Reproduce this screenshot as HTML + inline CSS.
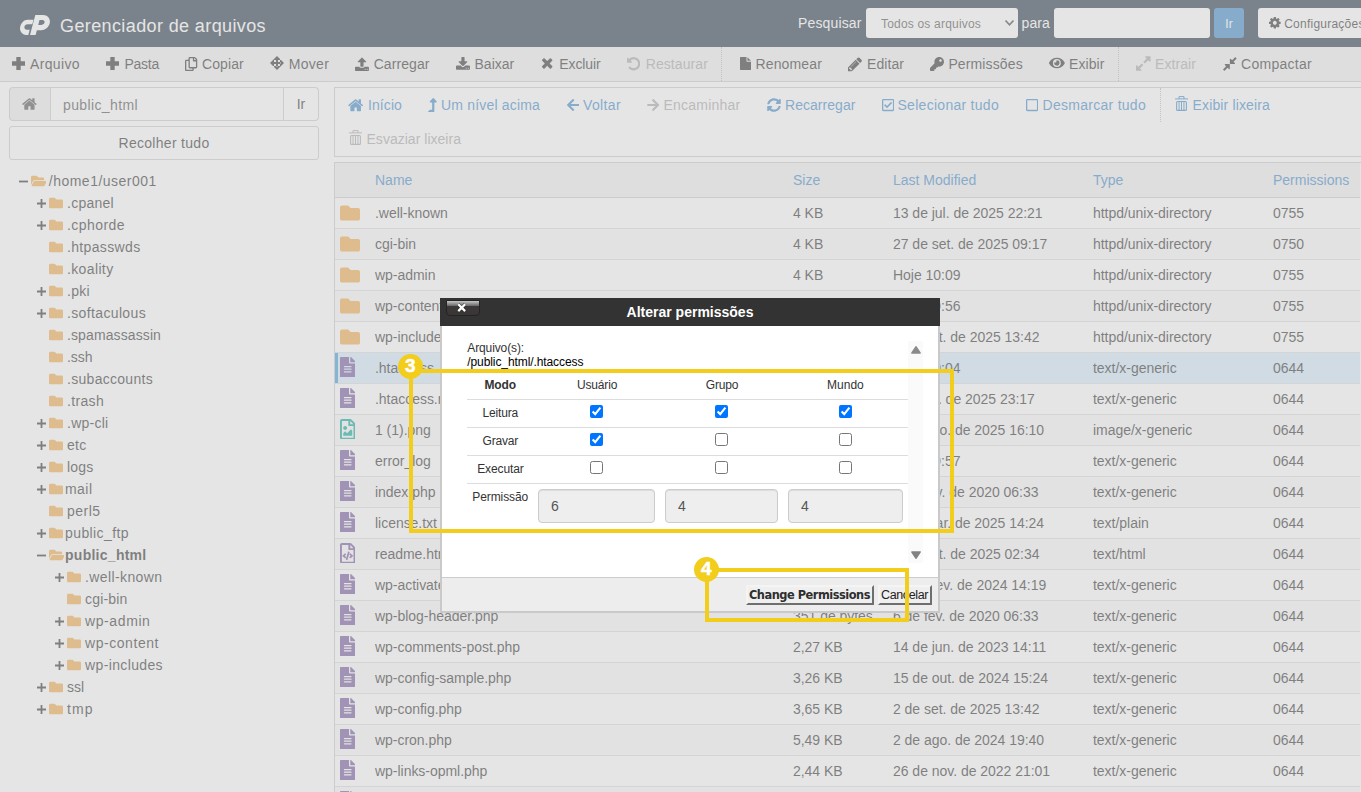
<!DOCTYPE html>
<html lang="pt-BR"><head><meta charset="utf-8"><title>Gerenciador de arquivos</title>
<style>
html,body{margin:0;padding:0}
body{width:1361px;height:792px;overflow:hidden;position:relative;background:#fff;font-family:'Liberation Sans', Arial, sans-serif}
#page,#mask,#dlg,#ann{position:absolute;left:0;top:0;width:1361px;height:792px;overflow:hidden}
#mask{background:rgba(204,204,204,.5)}
svg{display:block}
</style></head><body>
<div id="page">
<div style="position:absolute;left:0;top:0;width:1361px;height:47px;background:#293a4a"></div>
<svg style="position:absolute;left:20px;top:15px" width="30" height="20" viewBox="0 0 30 20">
<path fill="#fff" d="M7.400 4.800h6.100l-1.200 4.400H7.700c-1.500 0-2.800.900-3.200 2.300-.5 1.800.600 3.300 2.300 3.300h2.900L8.300 20H6.300C2.100 20-.9 16.100.3 11.600 1.300 7.600 4.200 4.800 7.400 4.800z"/>
<path fill="#fff" fill-rule="evenodd" d="M10 20L15.300 0H23.300C27.600 0 30.800 3.900 29.700 8.200 28.700 12.100 25.200 15.200 21.200 15.200H16.900L15.600 20zM19.500 4.900L18.200 9.900H21.500C22.900 9.900 24.200 8.900 24.500 7.600 24.900 6.200 23.900 4.900 22.500 4.900z"/>
</svg>
<div style="position:absolute;left:866px;top:8px;width:151.5px;height:30px;background:#fff;border-radius:3px"></div>
<svg style="position:absolute;left:1004px;top:18.5px" width="11" height="8" viewBox="0 0 11 8"><path d="M1.500 1.500L5.500 5.800L9.500 1.500" fill="none" stroke="#444" stroke-width="1.700"/></svg>
<div style="position:absolute;left:1054px;top:8px;width:155.5px;height:30px;background:#fff;border-radius:3px"></div>
<div style="position:absolute;left:1214px;top:8px;width:30px;height:30px;background:#428bca;border-radius:3px"></div>
<div style="position:absolute;left:1258px;top:8px;width:120px;height:30px;background:#fff;border-radius:3px"></div>
<svg style="position:absolute;left:1269.2px;top:16.2px;" width="11.66" height="13.6" viewBox="0 0 1536 1792"><path fill="#333" d="M1024 896q0-106-75-181t-181-75-181 75-75 181 75 181 181 75 181-75 75-181zm512-109v222q0 12-8 23t-20 13l-185 28q-19 54-39 91 35 50 107 138 10 12 10 25t-9 23q-27 37-99 108t-94 71q-12 0-26-9l-138-108q-44 23-91 38-16 136-29 186-7 28-36 28h-222q-14 0-24.500-8.500t-11.500-21.500l-28-184q-49-16-90-37l-141 107q-10 9-25 9-14 0-25-11-126-114-165-168-7-10-7-23 0-12 8-23 15-21 51-66.500t54-70.500q-27-50-41-99l-183-27q-13-2-21-12.500t-8-23.500v-222q0-12 8-23t19-13l186-28q14-46 39-92-40-57-107-138-10-12-10-24 0-10 9-23 26-36 98.500-107.500t94.500-71.500q13 0 26 10l138 107q44-23 91-38 16-136 29-186 7-28 36-28h222q14 0 24.500 8.500t11.500 21.500l28 184q49 16 90 37l142-107q9-9 24-9 13 0 25 10 129 119 165 170 7 8 7 22 0 12-8 23-15 21-51 66.500t-54 70.500q26 50 41 98l183 28q13 2 21 12.500t8 23.500z"/></svg>
<div style="position:absolute;left:0;top:47px;width:1361px;height:34px;background:#f0f0f0;border-bottom:1px solid #ccc"></div>
<svg style="position:absolute;left:12px;top:57px" width="13" height="13" viewBox="0 0 13 13"><path fill="#333" d="M4.3225 0h4.355v4.3225h4.3225v4.355h-4.3225v4.3225h-4.355v-4.3225h-4.3225v-4.355h4.3225z"/></svg>
<svg style="position:absolute;left:106.2px;top:57px" width="13" height="13" viewBox="0 0 13 13"><path fill="#333" d="M4.3225 0h4.355v4.3225h4.3225v4.355h-4.3225v4.3225h-4.355v-4.3225h-4.3225v-4.355h4.3225z"/></svg>
<svg style="position:absolute;left:185.3px;top:56.8px;" width="12.25" height="14" viewBox="0 0 448 512"><path fill="#333" d="M433.941 65.941l-51.882-51.882A48 48 0 0 0 348.118 0H176c-26.510 0-48 21.490-48 48v48H48c-26.510 0-48 21.490-48 48v320c0 26.510 21.490 48 48 48h224c26.510 0 48-21.490 48-48v-48h80c26.510 0 48-21.490 48-48V99.882a48 48 0 0 0-14.059-33.941zM266 464H54a6 6 0 0 1-6-6V150a6 6 0 0 1 6-6h74v224c0 26.510 21.490 48 48 48h96v42a6 6 0 0 1-6 6zm128-96H182a6 6 0 0 1-6-6V54a6 6 0 0 1 6-6h106v88c0 13.255 10.745 24 24 24h88v202a6 6 0 0 1-6 6zm6-256h-64V48h9.632c1.591 0 3.117.632 4.243 1.757l48.368 48.368a6 6 0 0 1 1.757 4.243V112z"/></svg>
<svg style="position:absolute;left:270.200px;top:56px;" width="14" height="14" viewBox="0 0 14 14"><path fill="#333" d="M7 0L11 4H3zM7 14L11 10H3zM0 7L4 3V11zM14 7L10 3V11zM6.050 3.500h1.900v7H6.050zM3.500 6.050h7v1.900h-7z"/></svg>
<svg style="position:absolute;left:355px;top:56.6px;" width="13.93" height="15" viewBox="0 0 1664 1792"><path fill="#333" d="M1280 1472q0-26-19-45t-45-19-45 19-19 45 19 45 45 19 45-19 19-45zm256 0q0-26-19-45t-45-19-45 19-19 45 19 45 45 19 45-19 19-45zm128-224v320q0 40-28 68t-68 28h-1472q-40 0-68-28t-28-68v-320q0-40 28-68t68-28h427q21 56 70.500 92t110.500 36h256q61 0 110.500-36t70.500-92h427q40 0 68 28t28 68zm-325-648q-17 40-59 40h-256v448q0 26-19 45t-45 19h-256q-26 0-45-19t-19-45v-448h-256q-42 0-59-40-17-39 14-69l448-448q18-19 45-19t45 19l448 448q31 30 14 69z"/></svg>
<svg style="position:absolute;left:455.7px;top:56.9px;" width="13.93" height="15" viewBox="0 0 1664 1792"><path fill="#333" d="M1280 1344q0-26-19-45t-45-19-45 19-19 45 19 45 45 19 45-19 19-45zm256 0q0-26-19-45t-45-19-45 19-19 45 19 45 45 19 45-19 19-45zm128-224v320q0 40-28 68t-68 28h-1472q-40 0-68-28t-28-68v-320q0-40 28-68t68-28h465l135 136q58 56 136 56t136-56l136-136h464q40 0 68 28t28 68zm-325-569q17 41-14 70l-448 448q-18 19-45 19t-45-19l-448-448q-31-29-14-70 17-39 59-39h256v-448q0-26 19-45t45-19h256q26 0 45 19t19 45v448h256q42 0 59 39z"/></svg>
<svg style="position:absolute;left:541.4px;top:54.8px;" width="12.41" height="15.8" viewBox="0 0 1408 1792"><path fill="#333" d="M1298 1322q0 40-28 68l-136 136q-28 28-68 28t-68-28l-294-294-294 294q-28 28-68 28t-68-28l-136-136q-28-28-28-68t28-68l294-294-294-294q-28-28-28-68t28-68l136-136q28-28 68-28t68 28l294 294 294-294q28-28 68-28t68 28l136 136q28 28 28 68t-28 68l-294 294 294 294q28 28 28 68z"/></svg>
<svg style="position:absolute;left:627px;top:55.8px;" width="13.29" height="15.5" viewBox="0 0 1536 1792"><path fill="#aaa" d="M1536 896q0 156-61 298t-164 245-245 164-298 61q-172 0-327-72.500t-264-204.500q-7-10-6.500-22.500t8.500-20.500l137-138q10-9 25-9 16 2 23 12 73 95 179 147t225 52q104 0 198.500-40.500t163.500-109.500 109.500-163.500 40.500-198.500-40.500-198.500-109.500-163.500-163.500-109.500-198.500-40.500q-98 0-188 35.500t-160 101.500l137 138q31 30 14 69-17 40-59 40h-448q-26 0-45-19t-19-45v-448q0-42 40-59 39-17 69 14l130 129q107-101 244.500-156.500t284.500-55.500q156 0 298 61t245 164 164 245 61 298z"/></svg>
<div style="position:absolute;left:721px;top:47px;width:0;height:34px;border-left:1px dotted #bbb"></div>
<svg style="position:absolute;left:740px;top:56.7px;" width="11.14" height="13" viewBox="0 0 1536 1792"><path fill="#333" d="M1024 512v-472q22 14 36 28l408 408q14 14 28 36h-472zm-128 32q0 40 28 68t68 28h544v1056q0 40-28 68t-68 28h-1344q-40 0-68-28t-28-68v-1600q0-40 28-68t68-28h800v544z"/></svg>
<svg style="position:absolute;left:848px;top:55.5px;" width="14.14" height="16.5" viewBox="0 0 1536 1792"><path fill="#333" d="M363 1536l91-91-235-235-91 91v107h128v128h107zm523-928q0-22-22-22-10 0-17 7l-542 542q-7 7-7 17 0 22 22 22 10 0 17-7l542-542q7-7 7-17zm-54-192l416 416-832 832h-416v-416zm683 96q0 53-37 90l-166 166-416-416 166-165q36-38 90-38 53 0 91 38l235 234q37 39 37 91z"/></svg>
<svg style="position:absolute;left:930.2px;top:57px;" width="14.00" height="14" viewBox="0 0 512 512"><path fill="#333" d="M512 176.001C512 273.203 433.202 352 336 352c-11.220 0-22.190-1.062-32.827-3.069l-24.012 27.014A23.999 23.999 0 0 1 261.223 384H224v40c0 13.255-10.745 24-24 24h-40v40c0 13.255-10.745 24-24 24H24c-13.255 0-24-10.745-24-24v-78.059c0-6.365 2.529-12.470 7.029-16.971l161.802-161.802C163.108 213.814 160 195.271 160 176 160 78.798 238.797.001 335.999 0 433.488-.001 512 78.511 512 176.001zM336 128c0 26.510 21.490 48 48 48s48-21.490 48-48-21.490-48-48-48-48 21.490-48 48z"/></svg>
<svg style="position:absolute;left:1049px;top:56.4px;" width="15.75" height="14" viewBox="0 0 576 512"><path fill="#333" d="M572.520 241.400C518.290 135.590 410.930 64 288 64S57.680 135.640 3.480 241.410a32.350 32.350 0 0 0 0 29.190C57.710 376.410 165.070 448 288 448s230.320-71.640 284.520-177.410a32.350 32.350 0 0 0 0-29.190zM288 400a144 144 0 1 1 144-144 143.930 143.930 0 0 1-144 144zm0-240a95.310 95.310 0 0 0-25.310 3.790 47.850 47.850 0 0 1-66.900 66.900A95.780 95.780 0 1 0 288 160z"/></svg>
<div style="position:absolute;left:1118px;top:47px;width:0;height:34px;border-left:1px dotted #bbb"></div>
<svg style="position:absolute;left:1136px;top:54.5px;" width="14.57" height="17" viewBox="0 0 1536 1792"><path fill="#aaa" d="M755 1056q0 13-10 23l-332 332 144 144q19 19 19 45t-19 45-45 19h-448q-26 0-45-19t-19-45v-448q0-26 19-45t45-19 45 19l144 144 332-332q10-10 23-10t23 10l114 114q10 10 10 23zm781-864v448q0 26-19 45t-45 19-45-19l-144-144-332 332q-10 10-23 10t-23-10l-114-114q-10-10-10-23t10-23l332-332-144-144q-19-19-19-45t19-45 45-19h448q26 0 45 19t19 45z"/></svg>
<svg style="position:absolute;left:1223.4px;top:55.5px;" width="13.71" height="16" viewBox="0 0 1536 1792"><path fill="#333" d="M768 960v448q0 26-19 45t-45 19-45-19l-144-144-332 332q-10 10-23 10t-23-10l-114-114q-10-10-10-23t10-23l332-332-144-144q-19-19-19-45t19-45 45-19h448q26 0 45 19t19 45zm755-672q0 13-10 23l-332 332 144 144q19 19 19 45t-19 45-45 19h-448q-26 0-45-19t-19-45v-448q0-26 19-45t45-19 45 19l144 144 332-332q10-10 23-10t23 10l114 114q10 10 10 23z"/></svg>
<div style="position:absolute;left:9px;top:87px;width:310px;height:34px;box-sizing:border-box;border:1px solid #ccc;border-radius:4px;background:#fff"></div>
<div style="position:absolute;left:9px;top:87px;width:41.500px;height:34px;box-sizing:border-box;border:1px solid #ccc;border-radius:4px 0 0 4px;background:#eee"></div>
<div style="position:absolute;left:282.700px;top:87px;width:36.300px;height:34px;box-sizing:border-box;border:1px solid #ccc;border-radius:0 4px 4px 0;background:#fff"></div>
<svg style="position:absolute;left:22px;top:96px;" width="14.86" height="16" viewBox="0 0 1664 1792"><path fill="#555" d="M1408 992v480q0 26-19 45t-45 19h-384v-384h-256v384h-384q-26 0-45-19t-19-45v-480q0-1 .5-3t.5-3l575-474 575 474q1 2 1 6zm223-69l-62 74q-8 9-21 11h-3q-13 0-21-7l-692-577-692 577q-12 8-24 7-13-2-21-11l-62-74q-8-10-7-23.500t11-21.500l719-599q32-26 76-26t76 26l244 204v-195q0-14 9-23t23-9h192q14 0 23 9t9 23v408l219 182q10 8 11 21.500t-7 23.500z"/></svg>
<div style="position:absolute;left:9px;top:126px;width:310px;height:34px;box-sizing:border-box;border:1px solid #ccc;border-radius:3px;background:#fff"></div>
<svg style="position:absolute;left:19px;top:176.5px" width="9" height="9" viewBox="0 0 9 9"><path d="M0 4.500h9" stroke="#333" stroke-width="1.800"/></svg>
<svg style="position:absolute;left:30.7px;top:173.7px;" width="15.75" height="14" viewBox="0 0 576 512"><path fill="#f0ad4e" d="M572.694 292.093L500.27 416.248A63.997 63.997 0 0 1 444.989 448H45.025c-18.523 0-30.064-20.093-20.731-36.093l72.424-124.155A64 64 0 0 1 152 256h399.964c18.523 0 30.064 20.093 20.730 36.093zM152 224h328v-48c0-26.510-21.490-48-48-48H272l-64-64H48C21.490 64 0 85.490 0 112v278.046l69.077-118.418C86.214 242.250 117.989 224 152 224z"/></svg>
<svg style="position:absolute;left:37px;top:198.5px" width="9" height="9" viewBox="0 0 9 9"><path d="M0 4.500h9M4.500 0v9" stroke="#333" stroke-width="1.800"/></svg>
<svg style="position:absolute;left:48.7px;top:195.7px;" width="14.00" height="14" viewBox="0 0 512 512"><path fill="#f0ad4e" d="M464 128H272l-64-64H48C21.49 64 0 85.49 0 112v288c0 26.51 21.49 48 48 48h416c26.51 0 48-21.49 48-48V176c0-26.51-21.49-48-48-48z"/></svg>
<svg style="position:absolute;left:37px;top:220.5px" width="9" height="9" viewBox="0 0 9 9"><path d="M0 4.500h9M4.500 0v9" stroke="#333" stroke-width="1.800"/></svg>
<svg style="position:absolute;left:48.7px;top:217.7px;" width="14.00" height="14" viewBox="0 0 512 512"><path fill="#f0ad4e" d="M464 128H272l-64-64H48C21.49 64 0 85.49 0 112v288c0 26.51 21.49 48 48 48h416c26.51 0 48-21.49 48-48V176c0-26.51-21.49-48-48-48z"/></svg>
<svg style="position:absolute;left:48.7px;top:239.7px;" width="14.00" height="14" viewBox="0 0 512 512"><path fill="#f0ad4e" d="M464 128H272l-64-64H48C21.49 64 0 85.49 0 112v288c0 26.51 21.49 48 48 48h416c26.51 0 48-21.49 48-48V176c0-26.51-21.49-48-48-48z"/></svg>
<svg style="position:absolute;left:48.7px;top:261.7px;" width="14.00" height="14" viewBox="0 0 512 512"><path fill="#f0ad4e" d="M464 128H272l-64-64H48C21.49 64 0 85.49 0 112v288c0 26.51 21.49 48 48 48h416c26.51 0 48-21.49 48-48V176c0-26.51-21.49-48-48-48z"/></svg>
<svg style="position:absolute;left:37px;top:286.5px" width="9" height="9" viewBox="0 0 9 9"><path d="M0 4.500h9M4.500 0v9" stroke="#333" stroke-width="1.800"/></svg>
<svg style="position:absolute;left:48.7px;top:283.7px;" width="14.00" height="14" viewBox="0 0 512 512"><path fill="#f0ad4e" d="M464 128H272l-64-64H48C21.49 64 0 85.49 0 112v288c0 26.51 21.49 48 48 48h416c26.51 0 48-21.49 48-48V176c0-26.51-21.49-48-48-48z"/></svg>
<svg style="position:absolute;left:37px;top:308.5px" width="9" height="9" viewBox="0 0 9 9"><path d="M0 4.500h9M4.500 0v9" stroke="#333" stroke-width="1.800"/></svg>
<svg style="position:absolute;left:48.7px;top:305.7px;" width="14.00" height="14" viewBox="0 0 512 512"><path fill="#f0ad4e" d="M464 128H272l-64-64H48C21.49 64 0 85.49 0 112v288c0 26.51 21.49 48 48 48h416c26.51 0 48-21.49 48-48V176c0-26.51-21.49-48-48-48z"/></svg>
<svg style="position:absolute;left:48.7px;top:327.7px;" width="14.00" height="14" viewBox="0 0 512 512"><path fill="#f0ad4e" d="M464 128H272l-64-64H48C21.49 64 0 85.49 0 112v288c0 26.51 21.49 48 48 48h416c26.51 0 48-21.49 48-48V176c0-26.51-21.49-48-48-48z"/></svg>
<svg style="position:absolute;left:48.7px;top:349.7px;" width="14.00" height="14" viewBox="0 0 512 512"><path fill="#f0ad4e" d="M464 128H272l-64-64H48C21.49 64 0 85.49 0 112v288c0 26.51 21.49 48 48 48h416c26.51 0 48-21.49 48-48V176c0-26.51-21.49-48-48-48z"/></svg>
<svg style="position:absolute;left:48.7px;top:371.7px;" width="14.00" height="14" viewBox="0 0 512 512"><path fill="#f0ad4e" d="M464 128H272l-64-64H48C21.49 64 0 85.49 0 112v288c0 26.51 21.49 48 48 48h416c26.51 0 48-21.49 48-48V176c0-26.51-21.49-48-48-48z"/></svg>
<svg style="position:absolute;left:48.7px;top:393.7px;" width="14.00" height="14" viewBox="0 0 512 512"><path fill="#f0ad4e" d="M464 128H272l-64-64H48C21.49 64 0 85.49 0 112v288c0 26.51 21.49 48 48 48h416c26.51 0 48-21.49 48-48V176c0-26.51-21.49-48-48-48z"/></svg>
<svg style="position:absolute;left:37px;top:418.5px" width="9" height="9" viewBox="0 0 9 9"><path d="M0 4.500h9M4.500 0v9" stroke="#333" stroke-width="1.800"/></svg>
<svg style="position:absolute;left:48.7px;top:415.7px;" width="14.00" height="14" viewBox="0 0 512 512"><path fill="#f0ad4e" d="M464 128H272l-64-64H48C21.49 64 0 85.49 0 112v288c0 26.51 21.49 48 48 48h416c26.51 0 48-21.49 48-48V176c0-26.51-21.49-48-48-48z"/></svg>
<svg style="position:absolute;left:37px;top:440.5px" width="9" height="9" viewBox="0 0 9 9"><path d="M0 4.500h9M4.500 0v9" stroke="#333" stroke-width="1.800"/></svg>
<svg style="position:absolute;left:48.7px;top:437.7px;" width="14.00" height="14" viewBox="0 0 512 512"><path fill="#f0ad4e" d="M464 128H272l-64-64H48C21.49 64 0 85.49 0 112v288c0 26.51 21.49 48 48 48h416c26.51 0 48-21.49 48-48V176c0-26.51-21.49-48-48-48z"/></svg>
<svg style="position:absolute;left:37px;top:462.5px" width="9" height="9" viewBox="0 0 9 9"><path d="M0 4.500h9M4.500 0v9" stroke="#333" stroke-width="1.800"/></svg>
<svg style="position:absolute;left:48.7px;top:459.7px;" width="14.00" height="14" viewBox="0 0 512 512"><path fill="#f0ad4e" d="M464 128H272l-64-64H48C21.49 64 0 85.49 0 112v288c0 26.51 21.49 48 48 48h416c26.51 0 48-21.49 48-48V176c0-26.51-21.49-48-48-48z"/></svg>
<svg style="position:absolute;left:37px;top:484.5px" width="9" height="9" viewBox="0 0 9 9"><path d="M0 4.500h9M4.500 0v9" stroke="#333" stroke-width="1.800"/></svg>
<svg style="position:absolute;left:48.7px;top:481.7px;" width="14.00" height="14" viewBox="0 0 512 512"><path fill="#f0ad4e" d="M464 128H272l-64-64H48C21.49 64 0 85.49 0 112v288c0 26.51 21.49 48 48 48h416c26.51 0 48-21.49 48-48V176c0-26.51-21.49-48-48-48z"/></svg>
<svg style="position:absolute;left:48.7px;top:503.7px;" width="14.00" height="14" viewBox="0 0 512 512"><path fill="#f0ad4e" d="M464 128H272l-64-64H48C21.49 64 0 85.49 0 112v288c0 26.51 21.49 48 48 48h416c26.51 0 48-21.49 48-48V176c0-26.51-21.49-48-48-48z"/></svg>
<svg style="position:absolute;left:37px;top:528.5px" width="9" height="9" viewBox="0 0 9 9"><path d="M0 4.500h9M4.500 0v9" stroke="#333" stroke-width="1.800"/></svg>
<svg style="position:absolute;left:48.7px;top:525.7px;" width="14.00" height="14" viewBox="0 0 512 512"><path fill="#f0ad4e" d="M464 128H272l-64-64H48C21.49 64 0 85.49 0 112v288c0 26.51 21.49 48 48 48h416c26.51 0 48-21.49 48-48V176c0-26.51-21.49-48-48-48z"/></svg>
<svg style="position:absolute;left:37px;top:550.5px" width="9" height="9" viewBox="0 0 9 9"><path d="M0 4.500h9" stroke="#333" stroke-width="1.800"/></svg>
<svg style="position:absolute;left:48.7px;top:547.7px;" width="15.75" height="14" viewBox="0 0 576 512"><path fill="#f0ad4e" d="M572.694 292.093L500.27 416.248A63.997 63.997 0 0 1 444.989 448H45.025c-18.523 0-30.064-20.093-20.731-36.093l72.424-124.155A64 64 0 0 1 152 256h399.964c18.523 0 30.064 20.093 20.730 36.093zM152 224h328v-48c0-26.510-21.490-48-48-48H272l-64-64H48C21.490 64 0 85.490 0 112v278.046l69.077-118.418C86.214 242.250 117.989 224 152 224z"/></svg>
<svg style="position:absolute;left:55px;top:572.5px" width="9" height="9" viewBox="0 0 9 9"><path d="M0 4.500h9M4.500 0v9" stroke="#333" stroke-width="1.800"/></svg>
<svg style="position:absolute;left:67px;top:569.7px;" width="14.00" height="14" viewBox="0 0 512 512"><path fill="#f0ad4e" d="M464 128H272l-64-64H48C21.49 64 0 85.49 0 112v288c0 26.51 21.49 48 48 48h416c26.51 0 48-21.49 48-48V176c0-26.51-21.49-48-48-48z"/></svg>
<svg style="position:absolute;left:67px;top:591.7px;" width="14.00" height="14" viewBox="0 0 512 512"><path fill="#f0ad4e" d="M464 128H272l-64-64H48C21.49 64 0 85.49 0 112v288c0 26.51 21.49 48 48 48h416c26.51 0 48-21.49 48-48V176c0-26.51-21.49-48-48-48z"/></svg>
<svg style="position:absolute;left:55px;top:616.5px" width="9" height="9" viewBox="0 0 9 9"><path d="M0 4.500h9M4.500 0v9" stroke="#333" stroke-width="1.800"/></svg>
<svg style="position:absolute;left:67px;top:613.7px;" width="14.00" height="14" viewBox="0 0 512 512"><path fill="#f0ad4e" d="M464 128H272l-64-64H48C21.49 64 0 85.49 0 112v288c0 26.51 21.49 48 48 48h416c26.51 0 48-21.49 48-48V176c0-26.51-21.49-48-48-48z"/></svg>
<svg style="position:absolute;left:55px;top:638.5px" width="9" height="9" viewBox="0 0 9 9"><path d="M0 4.500h9M4.500 0v9" stroke="#333" stroke-width="1.800"/></svg>
<svg style="position:absolute;left:67px;top:635.7px;" width="14.00" height="14" viewBox="0 0 512 512"><path fill="#f0ad4e" d="M464 128H272l-64-64H48C21.49 64 0 85.49 0 112v288c0 26.51 21.49 48 48 48h416c26.51 0 48-21.49 48-48V176c0-26.51-21.49-48-48-48z"/></svg>
<svg style="position:absolute;left:55px;top:660.5px" width="9" height="9" viewBox="0 0 9 9"><path d="M0 4.500h9M4.500 0v9" stroke="#333" stroke-width="1.800"/></svg>
<svg style="position:absolute;left:67px;top:657.7px;" width="14.00" height="14" viewBox="0 0 512 512"><path fill="#f0ad4e" d="M464 128H272l-64-64H48C21.49 64 0 85.49 0 112v288c0 26.51 21.49 48 48 48h416c26.51 0 48-21.49 48-48V176c0-26.51-21.49-48-48-48z"/></svg>
<svg style="position:absolute;left:37px;top:682.5px" width="9" height="9" viewBox="0 0 9 9"><path d="M0 4.500h9M4.500 0v9" stroke="#333" stroke-width="1.800"/></svg>
<svg style="position:absolute;left:48.7px;top:679.7px;" width="14.00" height="14" viewBox="0 0 512 512"><path fill="#f0ad4e" d="M464 128H272l-64-64H48C21.49 64 0 85.49 0 112v288c0 26.51 21.49 48 48 48h416c26.51 0 48-21.49 48-48V176c0-26.51-21.49-48-48-48z"/></svg>
<svg style="position:absolute;left:37px;top:704.5px" width="9" height="9" viewBox="0 0 9 9"><path d="M0 4.500h9M4.500 0v9" stroke="#333" stroke-width="1.800"/></svg>
<svg style="position:absolute;left:48.7px;top:701.7px;" width="14.00" height="14" viewBox="0 0 512 512"><path fill="#f0ad4e" d="M464 128H272l-64-64H48C21.49 64 0 85.49 0 112v288c0 26.51 21.49 48 48 48h416c26.51 0 48-21.49 48-48V176c0-26.51-21.49-48-48-48z"/></svg>
<div style="position:absolute;left:334px;top:87px;width:1040px;height:70px;box-sizing:border-box;border:1px solid #ccc;background:#fff"></div>
<svg style="position:absolute;left:348px;top:96.5px;" width="15.32" height="16.5" viewBox="0 0 1664 1792"><path fill="#428bca" d="M1408 992v480q0 26-19 45t-45 19h-384v-384h-256v384h-384q-26 0-45-19t-19-45v-480q0-1 .5-3t.5-3l575-474 575 474q1 2 1 6zm223-69l-62 74q-8 9-21 11h-3q-13 0-21-7l-692-577-692 577q-12 8-24 7-13-2-21-11l-62-74q-8-10-7-23.500t11-21.500l719-599q32-26 76-26t76 26l244 204v-195q0-14 9-23t23-9h192q14 0 23 9t9 23v408l219 182q10 8 11 21.500t-7 23.500z"/></svg>
<svg style="position:absolute;left:428px;top:98px;" width="8.75" height="14" viewBox="0 0 320 512"><path fill="#428bca" d="M313.553 119.669L209.587 7.666c-9.485-10.214-25.676-10.229-35.174 0L70.438 119.669C56.232 134.969 67.062 160 88.025 160H152v272H68.024a11.996 11.996 0 0 0-8.485 3.515l-56 56C-4.021 499.074 1.333 512 12.024 512H208c13.255 0 24-10.745 24-24V160h63.966c20.878 0 31.851-24.969 17.587-40.331z"/></svg>
<svg style="position:absolute;left:566.5px;top:98px;" width="12.25" height="14" viewBox="0 0 448 512"><path fill="#428bca" d="M257.5 445.100l-22.200 22.200c-9.400 9.400-24.600 9.400-33.900 0L7 273c-9.400-9.400-9.400-24.600 0-33.900L201.400 44.700c9.400-9.400 24.600-9.400 33.900 0l22.200 22.200c9.500 9.500 9.300 25-.4 34.300L136.600 216H424c13.300 0 24 10.700 24 24v32c0 13.300-10.700 24-24 24H136.600l120.500 114.800c9.800 9.300 10 24.800.4 34.300z"/></svg>
<svg style="position:absolute;left:647px;top:98px;transform:scaleX(-1);" width="12.25" height="14" viewBox="0 0 448 512"><path fill="#aaa" d="M257.5 445.100l-22.200 22.200c-9.400 9.400-24.600 9.400-33.900 0L7 273c-9.400-9.400-9.400-24.600 0-33.900L201.400 44.700c9.400-9.400 24.600-9.400 33.900 0l22.200 22.200c9.500 9.500 9.300 25-.4 34.300L136.600 216H424c13.300 0 24 10.700 24 24v32c0 13.300-10.700 24-24 24H136.600l120.500 114.800c9.800 9.300 10 24.800.4 34.300z"/></svg>
<svg style="position:absolute;left:767px;top:98px;" width="14.00" height="14" viewBox="0 0 512 512"><path fill="#428bca" d="M370.720 133.280C339.458 104.008 298.888 87.962 255.848 88c-77.458.068-144.328 53.178-162.791 126.850-1.344 5.363-6.122 9.150-11.651 9.150H24.103c-7.498 0-13.194-6.807-11.807-14.176C33.933 94.924 134.813 8 256 8c66.448 0 126.791 26.136 171.315 68.685L463.030 40.970C478.149 25.851 504 36.559 504 57.941V192c0 13.255-10.745 24-24 24H345.941c-21.382 0-32.090-25.851-16.971-40.971l41.750-41.749zM32 296h134.059c21.382 0 32.090 25.851 16.971 40.971l-41.750 41.750c31.262 29.273 71.835 45.319 114.876 45.280 77.418-.070 144.315-53.144 162.787-126.849 1.344-5.363 6.122-9.150 11.651-9.150h57.304c7.498 0 13.194 6.807 11.807 14.176C478.067 417.076 377.187 504 256 504c-66.448 0-126.791-26.136-171.315-68.685L48.970 471.030C33.851 486.149 8 475.441 8 454.059V320c0-13.255 10.745-24 24-24z"/></svg>
<svg style="position:absolute;left:881.5px;top:98px;" width="12.25" height="14" viewBox="0 0 448 512"><path fill="#428bca" d="M400 32H48C21.490 32 0 53.490 0 80v352c0 26.510 21.490 48 48 48h352c26.510 0 48-21.490 48-48V80c0-26.510-21.490-48-48-48zm0 400H48V80h352v352zm-35.864-241.724L191.547 361.480c-4.705 4.667-12.303 4.637-16.970-.068l-90.781-91.516c-4.667-4.705-4.637-12.303.069-16.971l22.719-22.536c4.705-4.667 12.303-4.637 16.970.069l59.792 60.277 141.352-140.216c4.705-4.667 12.303-4.637 16.970.068l22.536 22.718c4.667 4.706 4.637 12.304-.068 16.971z"/></svg>
<svg style="position:absolute;left:1025.5px;top:98px;" width="12.25" height="14" viewBox="0 0 448 512"><path fill="#428bca" d="M400 32H48C21.500 32 0 53.500 0 80v352c0 26.500 21.500 48 48 48h352c26.500 0 48-21.500 48-48V80c0-26.500-21.500-48-48-48zm-6 400H54c-3.300 0-6-2.700-6-6V86c0-3.300 2.700-6 6-6h340c3.300 0 6 2.700 6 6v340c0 3.300-2.700 6-6 6z"/></svg>
<div style="position:absolute;left:1160px;top:88px;width:0;height:34px;border-left:1px dotted #bbb"></div>
<svg style="position:absolute;left:1175px;top:95.5px" width="13" height="15" viewBox="0 0 13 15" fill="none" stroke="#428bca"><path d="M0 2.900h13" stroke-width="1"/><path d="M4 2.900V.600h5V2.900" stroke-width="1"/><rect x="1.600" y="5.500" width="9.800" height="8.900" rx="1" stroke-width="1.100"/><path d="M4.050 5.500v9M6.500 5.500v9M8.950 5.500v9" stroke-width="1"/></svg>
<svg style="position:absolute;left:349px;top:129.5px" width="13" height="15" viewBox="0 0 13 15" fill="none" stroke="#aaa"><path d="M0 2.900h13" stroke-width="1"/><path d="M4 2.900V.600h5V2.900" stroke-width="1"/><rect x="1.600" y="5.500" width="9.800" height="8.900" rx="1" stroke-width="1.100"/><path d="M4.050 5.500v9M6.500 5.500v9M8.950 5.500v9" stroke-width="1"/></svg>
<div style="position:absolute;left:334px;top:162px;width:1027px;height:640px;box-sizing:border-box;border:1px solid #ccc;border-right:0;background:#fff"></div>
<div style="position:absolute;left:335px;top:163px;width:1025px;height:34px;background:#f0f0f0;border-bottom:1px solid #ccc"></div>
<div style="position:absolute;left:335px;top:198px;width:1025px;height:30px;background:#fff;border-bottom:1px solid #ddd"></div>
<svg style="position:absolute;left:339.5px;top:203.0px;" width="20.00" height="20" viewBox="0 0 512 512"><path fill="#f0ad4e" d="M464 128H272l-64-64H48C21.49 64 0 85.49 0 112v288c0 26.51 21.49 48 48 48h416c26.51 0 48-21.49 48-48V176c0-26.51-21.49-48-48-48z"/></svg>
<div style="position:absolute;left:335px;top:229px;width:1025px;height:30px;background:#f9f9f9;border-bottom:1px solid #ddd"></div>
<svg style="position:absolute;left:339.5px;top:234.0px;" width="20.00" height="20" viewBox="0 0 512 512"><path fill="#f0ad4e" d="M464 128H272l-64-64H48C21.49 64 0 85.49 0 112v288c0 26.51 21.49 48 48 48h416c26.51 0 48-21.49 48-48V176c0-26.51-21.49-48-48-48z"/></svg>
<div style="position:absolute;left:335px;top:260px;width:1025px;height:30px;background:#fff;border-bottom:1px solid #ddd"></div>
<svg style="position:absolute;left:339.5px;top:265.0px;" width="20.00" height="20" viewBox="0 0 512 512"><path fill="#f0ad4e" d="M464 128H272l-64-64H48C21.49 64 0 85.49 0 112v288c0 26.51 21.49 48 48 48h416c26.51 0 48-21.49 48-48V176c0-26.51-21.49-48-48-48z"/></svg>
<div style="position:absolute;left:335px;top:291px;width:1025px;height:30px;background:#f9f9f9;border-bottom:1px solid #ddd"></div>
<svg style="position:absolute;left:339.5px;top:296.0px;" width="20.00" height="20" viewBox="0 0 512 512"><path fill="#f0ad4e" d="M464 128H272l-64-64H48C21.49 64 0 85.49 0 112v288c0 26.51 21.49 48 48 48h416c26.51 0 48-21.49 48-48V176c0-26.51-21.49-48-48-48z"/></svg>
<div style="position:absolute;left:335px;top:322px;width:1025px;height:30px;background:#fff;border-bottom:1px solid #ddd"></div>
<svg style="position:absolute;left:339.5px;top:327.0px;" width="20.00" height="20" viewBox="0 0 512 512"><path fill="#f0ad4e" d="M464 128H272l-64-64H48C21.49 64 0 85.49 0 112v288c0 26.51 21.49 48 48 48h416c26.51 0 48-21.49 48-48V176c0-26.51-21.49-48-48-48z"/></svg>
<div style="position:absolute;left:335px;top:353px;width:1025px;height:30px;background:#d5ebfc;border-bottom:1px solid #ddd"></div>
<div style="position:absolute;left:335px;top:353px;width:3px;height:30px;background:#3c9fd9"></div>
<svg style="position:absolute;left:340px;top:356.9px;" width="15.45" height="20.6" viewBox="0 0 384 512"><path fill="#765b9e" d="M224 136V0H24C10.7 0 0 10.7 0 24v464c0 13.3 10.7 24 24 24h336c13.3 0 24-10.7 24-24V160H248c-13.2 0-24-10.8-24-24zm64 236c0 6.600-5.400 12-12 12H108c-6.600 0-12-5.400-12-12v-8c0-6.600 5.400-12 12-12h168c6.600 0 12 5.400 12 12v8zm0-64c0 6.600-5.400 12-12 12H108c-6.600 0-12-5.400-12-12v-8c0-6.600 5.400-12 12-12h168c6.600 0 12 5.400 12 12v8zm0-72v8c0 6.600-5.400 12-12 12H108c-6.600 0-12-5.400-12-12v-8c0-6.600 5.400-12 12-12h168c6.600 0 12 5.400 12 12zm96-114.100v6.100H256V0h6.100c6.400 0 12.500 2.500 17 7l97.900 98c4.500 4.500 7 10.600 7 16.900z"/></svg>
<div style="position:absolute;left:335px;top:384px;width:1025px;height:30px;background:#fff;border-bottom:1px solid #ddd"></div>
<svg style="position:absolute;left:340px;top:387.9px;" width="15.45" height="20.6" viewBox="0 0 384 512"><path fill="#765b9e" d="M224 136V0H24C10.7 0 0 10.7 0 24v464c0 13.3 10.7 24 24 24h336c13.3 0 24-10.7 24-24V160H248c-13.2 0-24-10.8-24-24zm64 236c0 6.600-5.400 12-12 12H108c-6.600 0-12-5.400-12-12v-8c0-6.600 5.400-12 12-12h168c6.600 0 12 5.400 12 12v8zm0-64c0 6.600-5.400 12-12 12H108c-6.600 0-12-5.400-12-12v-8c0-6.600 5.400-12 12-12h168c6.600 0 12 5.400 12 12v8zm0-72v8c0 6.600-5.400 12-12 12H108c-6.600 0-12-5.400-12-12v-8c0-6.600 5.400-12 12-12h168c6.600 0 12 5.400 12 12zm96-114.100v6.100H256V0h6.100c6.400 0 12.500 2.500 17 7l97.900 98c4.500 4.500 7 10.600 7 16.900z"/></svg>
<div style="position:absolute;left:335px;top:415px;width:1025px;height:30px;background:#f9f9f9;border-bottom:1px solid #ddd"></div>
<svg style="position:absolute;left:340px;top:418.9px;" width="15.45" height="20.6" viewBox="0 0 384 512"><path fill="#0ca898" d="M369.900 97.900L286 14C277 5 264.800-.1 252.100-.1H48C21.500 0 0 21.500 0 48v416c0 26.500 21.500 48 48 48h288c26.500 0 48-21.500 48-48V131.900c0-12.700-5.100-25-14.100-34zM332.100 128H256V51.900l76.100 76.100zM48 464V48h160v104c0 13.300 10.700 24 24 24h104v288H48zm32-48h224V288l-23.500-23.500c-4.700-4.700-12.300-4.700-17 0L176 352l-39.500-39.500c-4.700-4.700-12.300-4.700-17 0L80 352v64zm48-240c-26.500 0-48 21.500-48 48s21.500 48 48 48 48-21.500 48-48-21.500-48-48-48z"/></svg>
<div style="position:absolute;left:335px;top:446px;width:1025px;height:30px;background:#fff;border-bottom:1px solid #ddd"></div>
<svg style="position:absolute;left:340px;top:449.9px;" width="15.45" height="20.6" viewBox="0 0 384 512"><path fill="#765b9e" d="M224 136V0H24C10.7 0 0 10.7 0 24v464c0 13.3 10.7 24 24 24h336c13.3 0 24-10.7 24-24V160H248c-13.2 0-24-10.8-24-24zm64 236c0 6.600-5.400 12-12 12H108c-6.600 0-12-5.400-12-12v-8c0-6.600 5.400-12 12-12h168c6.600 0 12 5.400 12 12v8zm0-64c0 6.600-5.400 12-12 12H108c-6.600 0-12-5.400-12-12v-8c0-6.600 5.400-12 12-12h168c6.600 0 12 5.400 12 12v8zm0-72v8c0 6.600-5.400 12-12 12H108c-6.600 0-12-5.400-12-12v-8c0-6.600 5.400-12 12-12h168c6.600 0 12 5.400 12 12zm96-114.100v6.100H256V0h6.100c6.400 0 12.500 2.500 17 7l97.900 98c4.500 4.500 7 10.600 7 16.900z"/></svg>
<div style="position:absolute;left:335px;top:477px;width:1025px;height:30px;background:#f9f9f9;border-bottom:1px solid #ddd"></div>
<svg style="position:absolute;left:340px;top:480.9px;" width="15.45" height="20.6" viewBox="0 0 384 512"><path fill="#765b9e" d="M224 136V0H24C10.7 0 0 10.7 0 24v464c0 13.3 10.7 24 24 24h336c13.3 0 24-10.7 24-24V160H248c-13.2 0-24-10.8-24-24zm64 236c0 6.600-5.400 12-12 12H108c-6.600 0-12-5.400-12-12v-8c0-6.600 5.400-12 12-12h168c6.600 0 12 5.400 12 12v8zm0-64c0 6.600-5.400 12-12 12H108c-6.600 0-12-5.400-12-12v-8c0-6.600 5.400-12 12-12h168c6.600 0 12 5.400 12 12v8zm0-72v8c0 6.600-5.400 12-12 12H108c-6.600 0-12-5.400-12-12v-8c0-6.600 5.400-12 12-12h168c6.600 0 12 5.400 12 12zm96-114.100v6.100H256V0h6.100c6.400 0 12.500 2.500 17 7l97.900 98c4.500 4.500 7 10.600 7 16.900z"/></svg>
<div style="position:absolute;left:335px;top:508px;width:1025px;height:30px;background:#fff;border-bottom:1px solid #ddd"></div>
<svg style="position:absolute;left:340px;top:511.9px;" width="15.45" height="20.6" viewBox="0 0 384 512"><path fill="#765b9e" d="M224 136V0H24C10.7 0 0 10.7 0 24v464c0 13.3 10.7 24 24 24h336c13.3 0 24-10.7 24-24V160H248c-13.2 0-24-10.8-24-24zm64 236c0 6.600-5.400 12-12 12H108c-6.600 0-12-5.400-12-12v-8c0-6.600 5.400-12 12-12h168c6.600 0 12 5.400 12 12v8zm0-64c0 6.600-5.400 12-12 12H108c-6.600 0-12-5.400-12-12v-8c0-6.600 5.400-12 12-12h168c6.600 0 12 5.400 12 12v8zm0-72v8c0 6.600-5.400 12-12 12H108c-6.600 0-12-5.400-12-12v-8c0-6.600 5.400-12 12-12h168c6.600 0 12 5.400 12 12zm96-114.100v6.100H256V0h6.100c6.400 0 12.500 2.500 17 7l97.900 98c4.500 4.500 7 10.600 7 16.900z"/></svg>
<div style="position:absolute;left:335px;top:539px;width:1025px;height:30px;background:#f9f9f9;border-bottom:1px solid #ddd"></div>
<svg style="position:absolute;left:340px;top:542.9px;" width="15.45" height="20.6" viewBox="0 0 384 512"><path fill="#765b9e" d="M149.900 349.100l-.2-.2-32.800-28.900 32.800-28.900c3.600-3.200 4-8.800.8-12.400l-.2-.2-17.400-18.600c-3.400-3.600-9-3.700-12.400-.4l-57.700 54.100c-3.700 3.500-3.700 9.400 0 12.800l57.700 54.100c1.600 1.500 3.800 2.400 6 2.400 2.400 0 4.800-1 6.400-2.800l17.400-18.600c3.300-3.500 3.100-9.100-.4-12.400zm220-251.200L286 14C277 5 264.800-.1 252.100-.1H48C21.500 0 0 21.500 0 48v416c0 26.500 21.500 48 48 48h288c26.500 0 48-21.500 48-48V131.900c0-12.700-5.100-25-14.100-34zM256 51.900l76.100 76.100H256zM336 464H48V48h160v104c0 13.300 10.700 24 24 24h104zM209.600 214c-4.700-1.400-9.500 1.300-10.900 6L144 408.100c-1.400 4.700 1.300 9.600 6 10.900l24.400 7.100c4.700 1.400 9.600-1.400 10.900-6L240 231.900c1.400-4.700-1.300-9.600-6-10.900zm24.500 76.900l.2.200 32.800 28.900-32.800 28.900c-3.600 3.200-4 8.800-.8 12.400l.2.200 17.400 18.600c3.300 3.500 8.900 3.700 12.400.4l57.700-54.100c3.700-3.500 3.700-9.400 0-12.800l-57.700-54.100c-3.500-3.300-9.100-3.200-12.400.4l-17.400 18.600c-3.300 3.500-3.100 9.100.4 12.400z"/></svg>
<div style="position:absolute;left:335px;top:570px;width:1025px;height:30px;background:#fff;border-bottom:1px solid #ddd"></div>
<svg style="position:absolute;left:340px;top:573.9px;" width="15.45" height="20.6" viewBox="0 0 384 512"><path fill="#765b9e" d="M224 136V0H24C10.7 0 0 10.7 0 24v464c0 13.3 10.7 24 24 24h336c13.3 0 24-10.7 24-24V160H248c-13.2 0-24-10.8-24-24zm64 236c0 6.600-5.400 12-12 12H108c-6.600 0-12-5.400-12-12v-8c0-6.600 5.400-12 12-12h168c6.600 0 12 5.400 12 12v8zm0-64c0 6.600-5.400 12-12 12H108c-6.600 0-12-5.400-12-12v-8c0-6.600 5.400-12 12-12h168c6.600 0 12 5.400 12 12v8zm0-72v8c0 6.600-5.400 12-12 12H108c-6.600 0-12-5.400-12-12v-8c0-6.600 5.400-12 12-12h168c6.600 0 12 5.400 12 12zm96-114.100v6.100H256V0h6.100c6.400 0 12.500 2.500 17 7l97.900 98c4.500 4.500 7 10.600 7 16.900z"/></svg>
<div style="position:absolute;left:335px;top:601px;width:1025px;height:30px;background:#f9f9f9;border-bottom:1px solid #ddd"></div>
<svg style="position:absolute;left:340px;top:604.9px;" width="15.45" height="20.6" viewBox="0 0 384 512"><path fill="#765b9e" d="M224 136V0H24C10.7 0 0 10.7 0 24v464c0 13.3 10.7 24 24 24h336c13.3 0 24-10.7 24-24V160H248c-13.2 0-24-10.8-24-24zm64 236c0 6.600-5.400 12-12 12H108c-6.600 0-12-5.400-12-12v-8c0-6.600 5.400-12 12-12h168c6.600 0 12 5.400 12 12v8zm0-64c0 6.600-5.400 12-12 12H108c-6.600 0-12-5.400-12-12v-8c0-6.600 5.400-12 12-12h168c6.600 0 12 5.400 12 12v8zm0-72v8c0 6.600-5.400 12-12 12H108c-6.600 0-12-5.400-12-12v-8c0-6.600 5.400-12 12-12h168c6.600 0 12 5.400 12 12zm96-114.100v6.100H256V0h6.100c6.400 0 12.500 2.500 17 7l97.900 98c4.500 4.500 7 10.600 7 16.900z"/></svg>
<div style="position:absolute;left:335px;top:632px;width:1025px;height:30px;background:#fff;border-bottom:1px solid #ddd"></div>
<svg style="position:absolute;left:340px;top:635.9px;" width="15.45" height="20.6" viewBox="0 0 384 512"><path fill="#765b9e" d="M224 136V0H24C10.7 0 0 10.7 0 24v464c0 13.3 10.7 24 24 24h336c13.3 0 24-10.7 24-24V160H248c-13.2 0-24-10.8-24-24zm64 236c0 6.600-5.400 12-12 12H108c-6.600 0-12-5.400-12-12v-8c0-6.600 5.400-12 12-12h168c6.600 0 12 5.400 12 12v8zm0-64c0 6.600-5.400 12-12 12H108c-6.600 0-12-5.400-12-12v-8c0-6.600 5.400-12 12-12h168c6.600 0 12 5.400 12 12v8zm0-72v8c0 6.600-5.400 12-12 12H108c-6.600 0-12-5.400-12-12v-8c0-6.600 5.400-12 12-12h168c6.600 0 12 5.400 12 12zm96-114.100v6.100H256V0h6.100c6.400 0 12.500 2.500 17 7l97.900 98c4.500 4.500 7 10.600 7 16.900z"/></svg>
<div style="position:absolute;left:335px;top:663px;width:1025px;height:30px;background:#f9f9f9;border-bottom:1px solid #ddd"></div>
<svg style="position:absolute;left:340px;top:666.9px;" width="15.45" height="20.6" viewBox="0 0 384 512"><path fill="#765b9e" d="M224 136V0H24C10.7 0 0 10.7 0 24v464c0 13.3 10.7 24 24 24h336c13.3 0 24-10.7 24-24V160H248c-13.2 0-24-10.8-24-24zm64 236c0 6.600-5.400 12-12 12H108c-6.600 0-12-5.400-12-12v-8c0-6.600 5.400-12 12-12h168c6.600 0 12 5.400 12 12v8zm0-64c0 6.600-5.400 12-12 12H108c-6.600 0-12-5.400-12-12v-8c0-6.600 5.400-12 12-12h168c6.600 0 12 5.400 12 12v8zm0-72v8c0 6.600-5.400 12-12 12H108c-6.600 0-12-5.400-12-12v-8c0-6.600 5.400-12 12-12h168c6.600 0 12 5.400 12 12zm96-114.100v6.100H256V0h6.100c6.400 0 12.500 2.500 17 7l97.900 98c4.500 4.500 7 10.600 7 16.900z"/></svg>
<div style="position:absolute;left:335px;top:694px;width:1025px;height:30px;background:#fff;border-bottom:1px solid #ddd"></div>
<svg style="position:absolute;left:340px;top:697.9px;" width="15.45" height="20.6" viewBox="0 0 384 512"><path fill="#765b9e" d="M224 136V0H24C10.7 0 0 10.7 0 24v464c0 13.3 10.7 24 24 24h336c13.3 0 24-10.7 24-24V160H248c-13.2 0-24-10.8-24-24zm64 236c0 6.600-5.400 12-12 12H108c-6.600 0-12-5.400-12-12v-8c0-6.600 5.400-12 12-12h168c6.600 0 12 5.400 12 12v8zm0-64c0 6.600-5.400 12-12 12H108c-6.600 0-12-5.400-12-12v-8c0-6.600 5.400-12 12-12h168c6.600 0 12 5.400 12 12v8zm0-72v8c0 6.600-5.400 12-12 12H108c-6.600 0-12-5.400-12-12v-8c0-6.600 5.400-12 12-12h168c6.600 0 12 5.400 12 12zm96-114.100v6.100H256V0h6.100c6.400 0 12.500 2.500 17 7l97.900 98c4.500 4.500 7 10.600 7 16.900z"/></svg>
<div style="position:absolute;left:335px;top:725px;width:1025px;height:30px;background:#f9f9f9;border-bottom:1px solid #ddd"></div>
<svg style="position:absolute;left:340px;top:728.9px;" width="15.45" height="20.6" viewBox="0 0 384 512"><path fill="#765b9e" d="M224 136V0H24C10.7 0 0 10.7 0 24v464c0 13.3 10.7 24 24 24h336c13.3 0 24-10.7 24-24V160H248c-13.2 0-24-10.8-24-24zm64 236c0 6.600-5.400 12-12 12H108c-6.600 0-12-5.400-12-12v-8c0-6.600 5.400-12 12-12h168c6.600 0 12 5.400 12 12v8zm0-64c0 6.600-5.400 12-12 12H108c-6.600 0-12-5.400-12-12v-8c0-6.600 5.400-12 12-12h168c6.600 0 12 5.400 12 12v8zm0-72v8c0 6.600-5.400 12-12 12H108c-6.600 0-12-5.400-12-12v-8c0-6.600 5.400-12 12-12h168c6.600 0 12 5.400 12 12zm96-114.100v6.100H256V0h6.100c6.400 0 12.500 2.500 17 7l97.900 98c4.500 4.500 7 10.600 7 16.900z"/></svg>
<div style="position:absolute;left:335px;top:756px;width:1025px;height:30px;background:#fff;border-bottom:1px solid #ddd"></div>
<svg style="position:absolute;left:340px;top:759.9px;" width="15.45" height="20.6" viewBox="0 0 384 512"><path fill="#765b9e" d="M224 136V0H24C10.7 0 0 10.7 0 24v464c0 13.3 10.7 24 24 24h336c13.3 0 24-10.7 24-24V160H248c-13.2 0-24-10.8-24-24zm64 236c0 6.600-5.400 12-12 12H108c-6.600 0-12-5.400-12-12v-8c0-6.600 5.400-12 12-12h168c6.600 0 12 5.400 12 12v8zm0-64c0 6.600-5.400 12-12 12H108c-6.600 0-12-5.400-12-12v-8c0-6.600 5.400-12 12-12h168c6.600 0 12 5.400 12 12v8zm0-72v8c0 6.600-5.400 12-12 12H108c-6.600 0-12-5.400-12-12v-8c0-6.600 5.400-12 12-12h168c6.600 0 12 5.400 12 12zm96-114.100v6.100H256V0h6.100c6.400 0 12.500 2.500 17 7l97.900 98c4.500 4.500 7 10.600 7 16.900z"/></svg>
<div style="position:absolute;left:335px;top:787px;width:1025px;height:30px;background:#f9f9f9;border-bottom:1px solid #ddd"></div>
<svg style="position:absolute;left:340px;top:790.9px;" width="15.45" height="20.6" viewBox="0 0 384 512"><path fill="#765b9e" d="M224 136V0H24C10.7 0 0 10.7 0 24v464c0 13.3 10.7 24 24 24h336c13.3 0 24-10.7 24-24V160H248c-13.2 0-24-10.8-24-24zm64 236c0 6.600-5.400 12-12 12H108c-6.600 0-12-5.400-12-12v-8c0-6.600 5.400-12 12-12h168c6.600 0 12 5.400 12 12v8zm0-64c0 6.600-5.400 12-12 12H108c-6.600 0-12-5.400-12-12v-8c0-6.600 5.400-12 12-12h168c6.600 0 12 5.400 12 12v8zm0-72v8c0 6.600-5.400 12-12 12H108c-6.600 0-12-5.400-12-12v-8c0-6.600 5.400-12 12-12h168c6.600 0 12 5.400 12 12zm96-114.100v6.100H256V0h6.100c6.400 0 12.500 2.500 17 7l97.900 98c4.500 4.500 7 10.600 7 16.900z"/></svg>
<div style="position:absolute;top:15.6px;white-space:pre;font:normal 18px/20px 'Liberation Sans', Arial, sans-serif;color:#fff;letter-spacing:0.386px;left:60px;">Gerenciador de arquivos</div>
<div style="position:absolute;top:12.6px;white-space:pre;font:normal 14px/20px 'Liberation Sans', Arial, sans-serif;color:#fff;letter-spacing:0.137px;left:798px;">Pesquisar</div>
<div style="position:absolute;top:14.2px;white-space:pre;font:normal 12px/20px 'Liberation Sans', Arial, sans-serif;color:#555;letter-spacing:0.192px;left:881px;">Todos os arquivos</div>
<div style="position:absolute;top:12.6px;white-space:pre;font:normal 14px/20px 'Liberation Sans', Arial, sans-serif;color:#fff;letter-spacing:0.117px;left:1021.5px;">para</div>
<div style="position:absolute;top:14.1px;white-space:pre;font:normal 12px/20px 'Liberation Sans', Arial, sans-serif;color:#fff;left:1225.3px;">Ir</div>
<div style="position:absolute;top:14.2px;white-space:pre;font:normal 12px/20px 'Liberation Sans', Arial, sans-serif;color:#333;letter-spacing:0.239px;left:1284.2px;">Configurações</div>
<div style="position:absolute;top:53.7px;white-space:pre;font:normal 14px/20px 'Liberation Sans', Arial, sans-serif;color:#333;letter-spacing:0.362px;left:30px;">Arquivo</div>
<div style="position:absolute;top:53.7px;white-space:pre;font:normal 14px/20px 'Liberation Sans', Arial, sans-serif;color:#333;letter-spacing:-0.263px;left:124.5px;">Pasta</div>
<div style="position:absolute;top:53.7px;white-space:pre;font:normal 14px/20px 'Liberation Sans', Arial, sans-serif;color:#333;letter-spacing:0.092px;left:202px;">Copiar</div>
<div style="position:absolute;top:53.7px;white-space:pre;font:normal 14px/20px 'Liberation Sans', Arial, sans-serif;color:#333;letter-spacing:0.279px;left:288.8px;">Mover</div>
<div style="position:absolute;top:53.7px;white-space:pre;font:normal 14px/20px 'Liberation Sans', Arial, sans-serif;color:#333;letter-spacing:0.069px;left:373.7px;">Carregar</div>
<div style="position:absolute;top:53.7px;white-space:pre;font:normal 14px/20px 'Liberation Sans', Arial, sans-serif;color:#333;letter-spacing:0.002px;left:474.5px;">Baixar</div>
<div style="position:absolute;top:53.7px;white-space:pre;font:normal 14px/20px 'Liberation Sans', Arial, sans-serif;color:#333;letter-spacing:-0.074px;left:559.2px;">Excluir</div>
<div style="position:absolute;top:53.7px;white-space:pre;font:normal 14px/20px 'Liberation Sans', Arial, sans-serif;color:#aaa;letter-spacing:0.092px;left:645.7px;">Restaurar</div>
<div style="position:absolute;top:53.7px;white-space:pre;font:normal 14px/20px 'Liberation Sans', Arial, sans-serif;color:#333;letter-spacing:0.141px;left:755.5px;">Renomear</div>
<div style="position:absolute;top:53.7px;white-space:pre;font:normal 14px/20px 'Liberation Sans', Arial, sans-serif;color:#333;letter-spacing:0.070px;left:867px;">Editar</div>
<div style="position:absolute;top:53.7px;white-space:pre;font:normal 14px/20px 'Liberation Sans', Arial, sans-serif;color:#333;letter-spacing:0.126px;left:948.4px;">Permissões</div>
<div style="position:absolute;top:53.7px;white-space:pre;font:normal 14px/20px 'Liberation Sans', Arial, sans-serif;color:#333;letter-spacing:0.097px;left:1069px;">Exibir</div>
<div style="position:absolute;top:53.7px;white-space:pre;font:normal 14px/20px 'Liberation Sans', Arial, sans-serif;color:#aaa;letter-spacing:0.078px;left:1155px;">Extrair</div>
<div style="position:absolute;top:53.7px;white-space:pre;font:normal 14px/20px 'Liberation Sans', Arial, sans-serif;color:#333;letter-spacing:0.281px;left:1241px;">Compactar</div>
<div style="position:absolute;top:94.6px;white-space:pre;font:normal 14px/20px 'Liberation Sans', Arial, sans-serif;color:#555;letter-spacing:0.379px;left:63px;">public_html</div>
<div style="position:absolute;top:94.0px;white-space:pre;font:normal 14px/20px 'Liberation Sans', Arial, sans-serif;color:#333;left:296.7px;">Ir</div>
<div style="position:absolute;top:132.8px;white-space:pre;font:normal 14px/20px 'Liberation Sans', Arial, sans-serif;color:#333;letter-spacing:0.294px;left:118.5px;">Recolher tudo</div>
<div style="position:absolute;top:171.3px;white-space:pre;font:normal 14px/20px 'Liberation Sans', Arial, sans-serif;color:#333;letter-spacing:0.487px;left:48.8px;">/home1/user001</div>
<div style="position:absolute;top:193.3px;white-space:pre;font:normal 14px/20px 'Liberation Sans', Arial, sans-serif;color:#333;letter-spacing:0.263px;left:67px;">.cpanel</div>
<div style="position:absolute;top:215.3px;white-space:pre;font:normal 14px/20px 'Liberation Sans', Arial, sans-serif;color:#333;letter-spacing:0.439px;left:67px;">.cphorde</div>
<div style="position:absolute;top:237.3px;white-space:pre;font:normal 14px/20px 'Liberation Sans', Arial, sans-serif;color:#333;letter-spacing:0.345px;left:67px;">.htpasswds</div>
<div style="position:absolute;top:259.3px;white-space:pre;font:normal 14px/20px 'Liberation Sans', Arial, sans-serif;color:#333;letter-spacing:0.365px;left:67px;">.koality</div>
<div style="position:absolute;top:281.3px;white-space:pre;font:normal 14px/20px 'Liberation Sans', Arial, sans-serif;color:#333;letter-spacing:0.301px;left:67px;">.pki</div>
<div style="position:absolute;top:303.3px;white-space:pre;font:normal 14px/20px 'Liberation Sans', Arial, sans-serif;color:#333;letter-spacing:0.357px;left:67px;">.softaculous</div>
<div style="position:absolute;top:325.3px;white-space:pre;font:normal 14px/20px 'Liberation Sans', Arial, sans-serif;color:#333;letter-spacing:0.108px;left:67px;">.spamassassin</div>
<div style="position:absolute;top:347.3px;white-space:pre;font:normal 14px/20px 'Liberation Sans', Arial, sans-serif;color:#333;letter-spacing:-0.047px;left:67px;">.ssh</div>
<div style="position:absolute;top:369.3px;white-space:pre;font:normal 14px/20px 'Liberation Sans', Arial, sans-serif;color:#333;letter-spacing:0.292px;left:67px;">.subaccounts</div>
<div style="position:absolute;top:391.3px;white-space:pre;font:normal 14px/20px 'Liberation Sans', Arial, sans-serif;color:#333;letter-spacing:0.331px;left:67px;">.trash</div>
<div style="position:absolute;top:413.3px;white-space:pre;font:normal 14px/20px 'Liberation Sans', Arial, sans-serif;color:#333;letter-spacing:0.261px;left:67px;">.wp-cli</div>
<div style="position:absolute;top:435.3px;white-space:pre;font:normal 14px/20px 'Liberation Sans', Arial, sans-serif;color:#333;letter-spacing:0.271px;left:67px;">etc</div>
<div style="position:absolute;top:457.3px;white-space:pre;font:normal 14px/20px 'Liberation Sans', Arial, sans-serif;color:#333;letter-spacing:0.203px;left:67px;">logs</div>
<div style="position:absolute;top:479.3px;white-space:pre;font:normal 14px/20px 'Liberation Sans', Arial, sans-serif;color:#333;letter-spacing:0.457px;left:65px;">mail</div>
<div style="position:absolute;top:501.3px;white-space:pre;font:normal 14px/20px 'Liberation Sans', Arial, sans-serif;color:#333;letter-spacing:0.472px;left:67px;">perl5</div>
<div style="position:absolute;top:523.3px;white-space:pre;font:normal 14px/20px 'Liberation Sans', Arial, sans-serif;color:#333;letter-spacing:0.406px;left:65px;">public_ftp</div>
<div style="position:absolute;top:545.3px;white-space:pre;font:bold 14px/20px 'Liberation Sans', Arial, sans-serif;color:#333;letter-spacing:0.267px;left:65px;">public_html</div>
<div style="position:absolute;top:567.3px;white-space:pre;font:normal 14px/20px 'Liberation Sans', Arial, sans-serif;color:#333;letter-spacing:0.396px;left:85px;">.well-known</div>
<div style="position:absolute;top:589.3px;white-space:pre;font:normal 14px/20px 'Liberation Sans', Arial, sans-serif;color:#333;letter-spacing:0.179px;left:85px;">cgi-bin</div>
<div style="position:absolute;top:611.3px;white-space:pre;font:normal 14px/20px 'Liberation Sans', Arial, sans-serif;color:#333;letter-spacing:0.600px;left:85px;">wp-admin</div>
<div style="position:absolute;top:633.3px;white-space:pre;font:normal 14px/20px 'Liberation Sans', Arial, sans-serif;color:#333;letter-spacing:0.552px;left:85px;">wp-content</div>
<div style="position:absolute;top:655.3px;white-space:pre;font:normal 14px/20px 'Liberation Sans', Arial, sans-serif;color:#333;letter-spacing:0.369px;left:85px;">wp-includes</div>
<div style="position:absolute;top:677.3px;white-space:pre;font:normal 14px/20px 'Liberation Sans', Arial, sans-serif;color:#333;letter-spacing:-0.042px;left:67px;">ssl</div>
<div style="position:absolute;top:699.3px;white-space:pre;font:normal 14px/20px 'Liberation Sans', Arial, sans-serif;color:#333;letter-spacing:1.052px;left:67px;">tmp</div>
<div style="position:absolute;top:95.0px;white-space:pre;font:normal 14px/20px 'Liberation Sans', Arial, sans-serif;color:#428bca;letter-spacing:0.089px;left:368px;">Início</div>
<div style="position:absolute;top:95.0px;white-space:pre;font:normal 14px/20px 'Liberation Sans', Arial, sans-serif;color:#428bca;letter-spacing:0.181px;left:441px;">Um nível acima</div>
<div style="position:absolute;top:95.0px;white-space:pre;font:normal 14px/20px 'Liberation Sans', Arial, sans-serif;color:#428bca;letter-spacing:0.365px;left:583px;">Voltar</div>
<div style="position:absolute;top:95.0px;white-space:pre;font:normal 14px/20px 'Liberation Sans', Arial, sans-serif;color:#aaa;letter-spacing:0.230px;left:663.5px;">Encaminhar</div>
<div style="position:absolute;top:95.0px;white-space:pre;font:normal 14px/20px 'Liberation Sans', Arial, sans-serif;color:#428bca;letter-spacing:0.047px;left:785px;">Recarregar</div>
<div style="position:absolute;top:95.0px;white-space:pre;font:normal 14px/20px 'Liberation Sans', Arial, sans-serif;color:#428bca;letter-spacing:0.280px;left:897.5px;">Selecionar tudo</div>
<div style="position:absolute;top:95.0px;white-space:pre;font:normal 14px/20px 'Liberation Sans', Arial, sans-serif;color:#428bca;letter-spacing:0.279px;left:1042.5px;">Desmarcar tudo</div>
<div style="position:absolute;top:95.0px;white-space:pre;font:normal 14px/20px 'Liberation Sans', Arial, sans-serif;color:#428bca;letter-spacing:0.145px;left:1192.5px;">Exibir lixeira</div>
<div style="position:absolute;top:129.0px;white-space:pre;font:normal 14px/20px 'Liberation Sans', Arial, sans-serif;color:#aaa;letter-spacing:0.022px;left:366.5px;">Esvaziar lixeira</div>
<div style="position:absolute;top:170.0px;white-space:pre;font:normal 14px/20px 'Liberation Sans', Arial, sans-serif;color:#428bca;left:375px;">Name</div>
<div style="position:absolute;top:170.0px;white-space:pre;font:normal 14px/20px 'Liberation Sans', Arial, sans-serif;color:#428bca;left:793px;">Size</div>
<div style="position:absolute;top:170.0px;white-space:pre;font:normal 14px/20px 'Liberation Sans', Arial, sans-serif;color:#428bca;left:893px;">Last Modified</div>
<div style="position:absolute;top:170.0px;white-space:pre;font:normal 14px/20px 'Liberation Sans', Arial, sans-serif;color:#428bca;left:1093px;">Type</div>
<div style="position:absolute;top:170.0px;white-space:pre;font:normal 14px/20px 'Liberation Sans', Arial, sans-serif;color:#428bca;left:1273px;">Permissions</div>
<div style="position:absolute;top:202.8px;white-space:pre;font:normal 14px/20px 'Liberation Sans', Arial, sans-serif;color:#333;left:375px;letter-spacing:-0.030px;">.well-known</div>
<div style="position:absolute;top:202.8px;white-space:pre;font:normal 14px/20px 'Liberation Sans', Arial, sans-serif;color:#333;left:793px;letter-spacing:-0.030px;">4 KB</div>
<div style="position:absolute;top:202.8px;white-space:pre;font:normal 14px/20px 'Liberation Sans', Arial, sans-serif;color:#333;left:893px;letter-spacing:-0.030px;">13 de jul. de 2025 22:21</div>
<div style="position:absolute;top:202.8px;white-space:pre;font:normal 14px/20px 'Liberation Sans', Arial, sans-serif;color:#333;left:1093px;letter-spacing:-0.030px;">httpd/unix-directory</div>
<div style="position:absolute;top:202.8px;white-space:pre;font:normal 14px/20px 'Liberation Sans', Arial, sans-serif;color:#333;left:1273px;letter-spacing:-0.030px;">0755</div>
<div style="position:absolute;top:233.8px;white-space:pre;font:normal 14px/20px 'Liberation Sans', Arial, sans-serif;color:#333;left:375px;letter-spacing:-0.030px;">cgi-bin</div>
<div style="position:absolute;top:233.8px;white-space:pre;font:normal 14px/20px 'Liberation Sans', Arial, sans-serif;color:#333;left:793px;letter-spacing:-0.030px;">4 KB</div>
<div style="position:absolute;top:233.8px;white-space:pre;font:normal 14px/20px 'Liberation Sans', Arial, sans-serif;color:#333;left:893px;letter-spacing:-0.030px;">27 de set. de 2025 09:17</div>
<div style="position:absolute;top:233.8px;white-space:pre;font:normal 14px/20px 'Liberation Sans', Arial, sans-serif;color:#333;left:1093px;letter-spacing:-0.030px;">httpd/unix-directory</div>
<div style="position:absolute;top:233.8px;white-space:pre;font:normal 14px/20px 'Liberation Sans', Arial, sans-serif;color:#333;left:1273px;letter-spacing:-0.030px;">0750</div>
<div style="position:absolute;top:264.8px;white-space:pre;font:normal 14px/20px 'Liberation Sans', Arial, sans-serif;color:#333;left:375px;letter-spacing:-0.030px;">wp-admin</div>
<div style="position:absolute;top:264.8px;white-space:pre;font:normal 14px/20px 'Liberation Sans', Arial, sans-serif;color:#333;left:793px;letter-spacing:-0.030px;">4 KB</div>
<div style="position:absolute;top:264.8px;white-space:pre;font:normal 14px/20px 'Liberation Sans', Arial, sans-serif;color:#333;left:893px;letter-spacing:-0.030px;">Hoje 10:09</div>
<div style="position:absolute;top:264.8px;white-space:pre;font:normal 14px/20px 'Liberation Sans', Arial, sans-serif;color:#333;left:1093px;letter-spacing:-0.030px;">httpd/unix-directory</div>
<div style="position:absolute;top:264.8px;white-space:pre;font:normal 14px/20px 'Liberation Sans', Arial, sans-serif;color:#333;left:1273px;letter-spacing:-0.030px;">0755</div>
<div style="position:absolute;top:295.8px;white-space:pre;font:normal 14px/20px 'Liberation Sans', Arial, sans-serif;color:#333;left:375px;letter-spacing:-0.030px;">wp-content</div>
<div style="position:absolute;top:295.8px;white-space:pre;font:normal 14px/20px 'Liberation Sans', Arial, sans-serif;color:#333;left:793px;letter-spacing:-0.030px;">4 KB</div>
<div style="position:absolute;top:295.8px;white-space:pre;font:normal 14px/20px 'Liberation Sans', Arial, sans-serif;color:#333;left:893px;letter-spacing:-0.030px;">Hoje 09:56</div>
<div style="position:absolute;top:295.8px;white-space:pre;font:normal 14px/20px 'Liberation Sans', Arial, sans-serif;color:#333;left:1093px;letter-spacing:-0.030px;">httpd/unix-directory</div>
<div style="position:absolute;top:295.8px;white-space:pre;font:normal 14px/20px 'Liberation Sans', Arial, sans-serif;color:#333;left:1273px;letter-spacing:-0.030px;">0755</div>
<div style="position:absolute;top:326.8px;white-space:pre;font:normal 14px/20px 'Liberation Sans', Arial, sans-serif;color:#333;left:375px;letter-spacing:-0.030px;">wp-includes</div>
<div style="position:absolute;top:326.8px;white-space:pre;font:normal 14px/20px 'Liberation Sans', Arial, sans-serif;color:#333;left:793px;letter-spacing:-0.030px;">4 KB</div>
<div style="position:absolute;top:326.8px;white-space:pre;font:normal 14px/20px 'Liberation Sans', Arial, sans-serif;color:#333;left:893px;letter-spacing:-0.030px;">2 de set. de 2025 13:42</div>
<div style="position:absolute;top:326.8px;white-space:pre;font:normal 14px/20px 'Liberation Sans', Arial, sans-serif;color:#333;left:1093px;letter-spacing:-0.030px;">httpd/unix-directory</div>
<div style="position:absolute;top:326.8px;white-space:pre;font:normal 14px/20px 'Liberation Sans', Arial, sans-serif;color:#333;left:1273px;letter-spacing:-0.030px;">0755</div>
<div style="position:absolute;top:357.8px;white-space:pre;font:normal 14px/20px 'Liberation Sans', Arial, sans-serif;color:#333;left:375px;letter-spacing:-0.030px;">.htaccess</div>
<div style="position:absolute;top:357.8px;white-space:pre;font:normal 14px/20px 'Liberation Sans', Arial, sans-serif;color:#333;left:793px;letter-spacing:-0.030px;">1,23 KB</div>
<div style="position:absolute;top:357.8px;white-space:pre;font:normal 14px/20px 'Liberation Sans', Arial, sans-serif;color:#333;left:893px;letter-spacing:-0.030px;">Hoje 10:04</div>
<div style="position:absolute;top:357.8px;white-space:pre;font:normal 14px/20px 'Liberation Sans', Arial, sans-serif;color:#333;left:1093px;letter-spacing:-0.030px;">text/x-generic</div>
<div style="position:absolute;top:357.8px;white-space:pre;font:normal 14px/20px 'Liberation Sans', Arial, sans-serif;color:#333;left:1273px;letter-spacing:-0.030px;">0644</div>
<div style="position:absolute;top:388.8px;white-space:pre;font:normal 14px/20px 'Liberation Sans', Arial, sans-serif;color:#333;left:375px;letter-spacing:-0.030px;">.htaccess.new</div>
<div style="position:absolute;top:388.8px;white-space:pre;font:normal 14px/20px 'Liberation Sans', Arial, sans-serif;color:#333;left:793px;letter-spacing:-0.030px;">546 bytes</div>
<div style="position:absolute;top:388.8px;white-space:pre;font:normal 14px/20px 'Liberation Sans', Arial, sans-serif;color:#333;left:893px;letter-spacing:-0.030px;">8 de jul. de 2025 23:17</div>
<div style="position:absolute;top:388.8px;white-space:pre;font:normal 14px/20px 'Liberation Sans', Arial, sans-serif;color:#333;left:1093px;letter-spacing:-0.030px;">text/x-generic</div>
<div style="position:absolute;top:388.8px;white-space:pre;font:normal 14px/20px 'Liberation Sans', Arial, sans-serif;color:#333;left:1273px;letter-spacing:-0.030px;">0644</div>
<div style="position:absolute;top:419.8px;white-space:pre;font:normal 14px/20px 'Liberation Sans', Arial, sans-serif;color:#333;left:375px;letter-spacing:-0.030px;">1 (1).png</div>
<div style="position:absolute;top:419.8px;white-space:pre;font:normal 14px/20px 'Liberation Sans', Arial, sans-serif;color:#333;left:793px;letter-spacing:-0.030px;">44,51 KB</div>
<div style="position:absolute;top:419.8px;white-space:pre;font:normal 14px/20px 'Liberation Sans', Arial, sans-serif;color:#333;left:893px;letter-spacing:-0.030px;">7 de ago. de 2025 16:10</div>
<div style="position:absolute;top:419.8px;white-space:pre;font:normal 14px/20px 'Liberation Sans', Arial, sans-serif;color:#333;left:1093px;letter-spacing:-0.030px;">image/x-generic</div>
<div style="position:absolute;top:419.8px;white-space:pre;font:normal 14px/20px 'Liberation Sans', Arial, sans-serif;color:#333;left:1273px;letter-spacing:-0.030px;">0644</div>
<div style="position:absolute;top:450.8px;white-space:pre;font:normal 14px/20px 'Liberation Sans', Arial, sans-serif;color:#333;left:375px;letter-spacing:-0.030px;">error_log</div>
<div style="position:absolute;top:450.8px;white-space:pre;font:normal 14px/20px 'Liberation Sans', Arial, sans-serif;color:#333;left:793px;letter-spacing:-0.030px;">1,02 KB</div>
<div style="position:absolute;top:450.8px;white-space:pre;font:normal 14px/20px 'Liberation Sans', Arial, sans-serif;color:#333;left:893px;letter-spacing:-0.030px;">Hoje 09:57</div>
<div style="position:absolute;top:450.8px;white-space:pre;font:normal 14px/20px 'Liberation Sans', Arial, sans-serif;color:#333;left:1093px;letter-spacing:-0.030px;">text/x-generic</div>
<div style="position:absolute;top:450.8px;white-space:pre;font:normal 14px/20px 'Liberation Sans', Arial, sans-serif;color:#333;left:1273px;letter-spacing:-0.030px;">0644</div>
<div style="position:absolute;top:481.8px;white-space:pre;font:normal 14px/20px 'Liberation Sans', Arial, sans-serif;color:#333;left:375px;letter-spacing:-0.030px;">index.php</div>
<div style="position:absolute;top:481.8px;white-space:pre;font:normal 14px/20px 'Liberation Sans', Arial, sans-serif;color:#333;left:793px;letter-spacing:-0.030px;">405 bytes</div>
<div style="position:absolute;top:481.8px;white-space:pre;font:normal 14px/20px 'Liberation Sans', Arial, sans-serif;color:#333;left:893px;letter-spacing:-0.030px;">6 de fev. de 2020 06:33</div>
<div style="position:absolute;top:481.8px;white-space:pre;font:normal 14px/20px 'Liberation Sans', Arial, sans-serif;color:#333;left:1093px;letter-spacing:-0.030px;">text/x-generic</div>
<div style="position:absolute;top:481.8px;white-space:pre;font:normal 14px/20px 'Liberation Sans', Arial, sans-serif;color:#333;left:1273px;letter-spacing:-0.030px;">0644</div>
<div style="position:absolute;top:512.8px;white-space:pre;font:normal 14px/20px 'Liberation Sans', Arial, sans-serif;color:#333;left:375px;letter-spacing:-0.030px;">license.txt</div>
<div style="position:absolute;top:512.8px;white-space:pre;font:normal 14px/20px 'Liberation Sans', Arial, sans-serif;color:#333;left:793px;letter-spacing:-0.030px;">19,44 KB</div>
<div style="position:absolute;top:512.8px;white-space:pre;font:normal 14px/20px 'Liberation Sans', Arial, sans-serif;color:#333;left:893px;letter-spacing:-0.030px;">5 de mar. de 2025 14:24</div>
<div style="position:absolute;top:512.8px;white-space:pre;font:normal 14px/20px 'Liberation Sans', Arial, sans-serif;color:#333;left:1093px;letter-spacing:-0.030px;">text/plain</div>
<div style="position:absolute;top:512.8px;white-space:pre;font:normal 14px/20px 'Liberation Sans', Arial, sans-serif;color:#333;left:1273px;letter-spacing:-0.030px;">0644</div>
<div style="position:absolute;top:543.8px;white-space:pre;font:normal 14px/20px 'Liberation Sans', Arial, sans-serif;color:#333;left:375px;letter-spacing:-0.030px;">readme.html</div>
<div style="position:absolute;top:543.8px;white-space:pre;font:normal 14px/20px 'Liberation Sans', Arial, sans-serif;color:#333;left:793px;letter-spacing:-0.030px;">7,25 KB</div>
<div style="position:absolute;top:543.8px;white-space:pre;font:normal 14px/20px 'Liberation Sans', Arial, sans-serif;color:#333;left:893px;letter-spacing:-0.030px;">3 de set. de 2025 02:34</div>
<div style="position:absolute;top:543.8px;white-space:pre;font:normal 14px/20px 'Liberation Sans', Arial, sans-serif;color:#333;left:1093px;letter-spacing:-0.030px;">text/html</div>
<div style="position:absolute;top:543.8px;white-space:pre;font:normal 14px/20px 'Liberation Sans', Arial, sans-serif;color:#333;left:1273px;letter-spacing:-0.030px;">0644</div>
<div style="position:absolute;top:574.8px;white-space:pre;font:normal 14px/20px 'Liberation Sans', Arial, sans-serif;color:#333;left:375px;letter-spacing:-0.030px;">wp-activate.php</div>
<div style="position:absolute;top:574.8px;white-space:pre;font:normal 14px/20px 'Liberation Sans', Arial, sans-serif;color:#333;left:793px;letter-spacing:-0.030px;">7,18 KB</div>
<div style="position:absolute;top:574.8px;white-space:pre;font:normal 14px/20px 'Liberation Sans', Arial, sans-serif;color:#333;left:893px;letter-spacing:-0.030px;">13 de fev. de 2024 14:19</div>
<div style="position:absolute;top:574.8px;white-space:pre;font:normal 14px/20px 'Liberation Sans', Arial, sans-serif;color:#333;left:1093px;letter-spacing:-0.030px;">text/x-generic</div>
<div style="position:absolute;top:574.8px;white-space:pre;font:normal 14px/20px 'Liberation Sans', Arial, sans-serif;color:#333;left:1273px;letter-spacing:-0.030px;">0644</div>
<div style="position:absolute;top:605.8px;white-space:pre;font:normal 14px/20px 'Liberation Sans', Arial, sans-serif;color:#333;left:375px;letter-spacing:-0.030px;">wp-blog-header.php</div>
<div style="position:absolute;top:605.8px;white-space:pre;font:normal 14px/20px 'Liberation Sans', Arial, sans-serif;color:#333;left:793px;letter-spacing:-0.030px;">351 de bytes</div>
<div style="position:absolute;top:605.8px;white-space:pre;font:normal 14px/20px 'Liberation Sans', Arial, sans-serif;color:#333;left:893px;letter-spacing:-0.030px;">6 de fev. de 2020 06:33</div>
<div style="position:absolute;top:605.8px;white-space:pre;font:normal 14px/20px 'Liberation Sans', Arial, sans-serif;color:#333;left:1093px;letter-spacing:-0.030px;">text/x-generic</div>
<div style="position:absolute;top:605.8px;white-space:pre;font:normal 14px/20px 'Liberation Sans', Arial, sans-serif;color:#333;left:1273px;letter-spacing:-0.030px;">0644</div>
<div style="position:absolute;top:636.8px;white-space:pre;font:normal 14px/20px 'Liberation Sans', Arial, sans-serif;color:#333;left:375px;letter-spacing:-0.030px;">wp-comments-post.php</div>
<div style="position:absolute;top:636.8px;white-space:pre;font:normal 14px/20px 'Liberation Sans', Arial, sans-serif;color:#333;left:793px;letter-spacing:-0.030px;">2,27 KB</div>
<div style="position:absolute;top:636.8px;white-space:pre;font:normal 14px/20px 'Liberation Sans', Arial, sans-serif;color:#333;left:893px;letter-spacing:-0.030px;">14 de jun. de 2023 14:11</div>
<div style="position:absolute;top:636.8px;white-space:pre;font:normal 14px/20px 'Liberation Sans', Arial, sans-serif;color:#333;left:1093px;letter-spacing:-0.030px;">text/x-generic</div>
<div style="position:absolute;top:636.8px;white-space:pre;font:normal 14px/20px 'Liberation Sans', Arial, sans-serif;color:#333;left:1273px;letter-spacing:-0.030px;">0644</div>
<div style="position:absolute;top:667.8px;white-space:pre;font:normal 14px/20px 'Liberation Sans', Arial, sans-serif;color:#333;left:375px;letter-spacing:-0.030px;">wp-config-sample.php</div>
<div style="position:absolute;top:667.8px;white-space:pre;font:normal 14px/20px 'Liberation Sans', Arial, sans-serif;color:#333;left:793px;letter-spacing:-0.030px;">3,26 KB</div>
<div style="position:absolute;top:667.8px;white-space:pre;font:normal 14px/20px 'Liberation Sans', Arial, sans-serif;color:#333;left:893px;letter-spacing:-0.030px;">15 de out. de 2024 15:24</div>
<div style="position:absolute;top:667.8px;white-space:pre;font:normal 14px/20px 'Liberation Sans', Arial, sans-serif;color:#333;left:1093px;letter-spacing:-0.030px;">text/x-generic</div>
<div style="position:absolute;top:667.8px;white-space:pre;font:normal 14px/20px 'Liberation Sans', Arial, sans-serif;color:#333;left:1273px;letter-spacing:-0.030px;">0644</div>
<div style="position:absolute;top:698.8px;white-space:pre;font:normal 14px/20px 'Liberation Sans', Arial, sans-serif;color:#333;left:375px;letter-spacing:-0.030px;">wp-config.php</div>
<div style="position:absolute;top:698.8px;white-space:pre;font:normal 14px/20px 'Liberation Sans', Arial, sans-serif;color:#333;left:793px;letter-spacing:-0.030px;">3,65 KB</div>
<div style="position:absolute;top:698.8px;white-space:pre;font:normal 14px/20px 'Liberation Sans', Arial, sans-serif;color:#333;left:893px;letter-spacing:-0.030px;">2 de set. de 2025 13:42</div>
<div style="position:absolute;top:698.8px;white-space:pre;font:normal 14px/20px 'Liberation Sans', Arial, sans-serif;color:#333;left:1093px;letter-spacing:-0.030px;">text/x-generic</div>
<div style="position:absolute;top:698.8px;white-space:pre;font:normal 14px/20px 'Liberation Sans', Arial, sans-serif;color:#333;left:1273px;letter-spacing:-0.030px;">0644</div>
<div style="position:absolute;top:729.8px;white-space:pre;font:normal 14px/20px 'Liberation Sans', Arial, sans-serif;color:#333;left:375px;letter-spacing:-0.030px;">wp-cron.php</div>
<div style="position:absolute;top:729.8px;white-space:pre;font:normal 14px/20px 'Liberation Sans', Arial, sans-serif;color:#333;left:793px;letter-spacing:-0.030px;">5,49 KB</div>
<div style="position:absolute;top:729.8px;white-space:pre;font:normal 14px/20px 'Liberation Sans', Arial, sans-serif;color:#333;left:893px;letter-spacing:-0.030px;">2 de ago. de 2024 19:40</div>
<div style="position:absolute;top:729.8px;white-space:pre;font:normal 14px/20px 'Liberation Sans', Arial, sans-serif;color:#333;left:1093px;letter-spacing:-0.030px;">text/x-generic</div>
<div style="position:absolute;top:729.8px;white-space:pre;font:normal 14px/20px 'Liberation Sans', Arial, sans-serif;color:#333;left:1273px;letter-spacing:-0.030px;">0644</div>
<div style="position:absolute;top:760.8px;white-space:pre;font:normal 14px/20px 'Liberation Sans', Arial, sans-serif;color:#333;left:375px;letter-spacing:-0.030px;">wp-links-opml.php</div>
<div style="position:absolute;top:760.8px;white-space:pre;font:normal 14px/20px 'Liberation Sans', Arial, sans-serif;color:#333;left:793px;letter-spacing:-0.030px;">2,44 KB</div>
<div style="position:absolute;top:760.8px;white-space:pre;font:normal 14px/20px 'Liberation Sans', Arial, sans-serif;color:#333;left:893px;letter-spacing:-0.030px;">26 de nov. de 2022 21:01</div>
<div style="position:absolute;top:760.8px;white-space:pre;font:normal 14px/20px 'Liberation Sans', Arial, sans-serif;color:#333;left:1093px;letter-spacing:-0.030px;">text/x-generic</div>
<div style="position:absolute;top:760.8px;white-space:pre;font:normal 14px/20px 'Liberation Sans', Arial, sans-serif;color:#333;left:1273px;letter-spacing:-0.030px;">0644</div>
<div style="position:absolute;top:791.8px;white-space:pre;font:normal 14px/20px 'Liberation Sans', Arial, sans-serif;color:#333;left:375px;letter-spacing:-0.030px;">wp-load.php</div>
<div style="position:absolute;top:791.8px;white-space:pre;font:normal 14px/20px 'Liberation Sans', Arial, sans-serif;color:#333;left:793px;letter-spacing:-0.030px;">3,84 KB</div>
<div style="position:absolute;top:791.8px;white-space:pre;font:normal 14px/20px 'Liberation Sans', Arial, sans-serif;color:#333;left:893px;letter-spacing:-0.030px;">11 de mar. de 2024 10:05</div>
<div style="position:absolute;top:791.8px;white-space:pre;font:normal 14px/20px 'Liberation Sans', Arial, sans-serif;color:#333;left:1093px;letter-spacing:-0.030px;">text/x-generic</div>
<div style="position:absolute;top:791.8px;white-space:pre;font:normal 14px/20px 'Liberation Sans', Arial, sans-serif;color:#333;left:1273px;letter-spacing:-0.030px;">0644</div>
</div>
<div id="mask"></div>
<div id="dlg">
<div style="position:absolute;left:440px;top:298px;width:500px;height:315px;box-sizing:border-box;border:2px solid #c9c9c9;background:#fff"></div>
<div style="position:absolute;left:440px;top:298px;width:500px;height:27.700px;background:#333"></div>
<div style="position:absolute;left:446px;top:300px;width:34px;height:16px;box-sizing:border-box;border:1px solid #242424;border-radius:1px 1px 4px 4px;background:linear-gradient(#c6c6c6 0%,#6e6e6e 33%,#3e3939 36%,#3a3535 100%)"></div>
<svg style="position:absolute;left:457.300px;top:303.400px" width="9.400" height="9.400" viewBox="0 0 9 9"><path d="M1.200 1.200L7.800 7.800M7.800 1.200L1.200 7.800" stroke="#111" stroke-width="3.200" opacity=".55"/><path d="M1.200 1.200L7.800 7.800M7.800 1.200L1.200 7.800" stroke="#fff" stroke-width="2.200"/></svg>
<div style="position:absolute;left:908px;top:341px;width:15px;height:222px;background:#fafafa"></div>
<svg style="position:absolute;left:910.500px;top:345.500px" width="10" height="8" viewBox="0 0 10 8"><path d="M5 1L9 7H1z" fill="#8a8a8a" stroke="#8a8a8a" stroke-width="1.700" stroke-linejoin="round"/></svg>
<svg style="position:absolute;left:910.500px;top:550.500px" width="10" height="8" viewBox="0 0 10 8"><path d="M5 7L9 1H1z" fill="#828282" stroke="#828282" stroke-width="1.700" stroke-linejoin="round"/></svg>
<div style="position:absolute;left:467px;top:399px;width:441px;height:1px;background:#ddd"></div>
<div style="position:absolute;left:467px;top:427px;width:441px;height:1px;background:#ddd"></div>
<div style="position:absolute;left:467px;top:455px;width:441px;height:1px;background:#ddd"></div>
<div style="position:absolute;left:467px;top:483px;width:441px;height:1px;background:#ddd"></div>
<input type="checkbox" checked style="position:absolute;left:590.0px;top:405.0px;width:13px;height:13px;margin:0">
<input type="checkbox" checked style="position:absolute;left:714.5px;top:405.0px;width:13px;height:13px;margin:0">
<input type="checkbox" checked style="position:absolute;left:839.0px;top:405.0px;width:13px;height:13px;margin:0">
<input type="checkbox" checked style="position:absolute;left:590.0px;top:433.0px;width:13px;height:13px;margin:0">
<input type="checkbox"  style="position:absolute;left:714.5px;top:433.0px;width:13px;height:13px;margin:0">
<input type="checkbox"  style="position:absolute;left:839.0px;top:433.0px;width:13px;height:13px;margin:0">
<input type="checkbox"  style="position:absolute;left:590.0px;top:461.0px;width:13px;height:13px;margin:0">
<input type="checkbox"  style="position:absolute;left:714.5px;top:461.0px;width:13px;height:13px;margin:0">
<input type="checkbox"  style="position:absolute;left:839.0px;top:461.0px;width:13px;height:13px;margin:0">
<div style="position:absolute;left:538px;top:489px;width:117px;height:34px;box-sizing:border-box;border:1px solid #ccc;border-radius:4px;background:#eee;box-shadow:inset 0 1px 1px rgba(0,0,0,.075)"></div>
<div style="position:absolute;left:665px;top:489px;width:112.5px;height:34px;box-sizing:border-box;border:1px solid #ccc;border-radius:4px;background:#eee;box-shadow:inset 0 1px 1px rgba(0,0,0,.075)"></div>
<div style="position:absolute;left:788px;top:489px;width:114.5px;height:34px;box-sizing:border-box;border:1px solid #ccc;border-radius:4px;background:#eee;box-shadow:inset 0 1px 1px rgba(0,0,0,.075)"></div>
<div style="position:absolute;left:442px;top:577px;width:496px;height:34px;background:#ededed;border-top:1px solid #ccc;box-sizing:border-box"></div>
<div style="position:absolute;top:584.500px;height:20.500px;box-sizing:border-box;background:#efefef;border:2px solid;border-color:#f4f4f4 #6f6f6f #6f6f6f #f4f4f4;left:745.500px;width:128.500px"></div>
<div style="position:absolute;top:584.500px;height:20.500px;box-sizing:border-box;background:#efefef;border:2px solid;border-color:#f4f4f4 #6f6f6f #6f6f6f #f4f4f4;left:878px;width:54px"></div>
<div style="position:absolute;top:302.0px;white-space:pre;font:bold 14px/20px 'Liberation Sans', Arial, sans-serif;color:#fff;left:626.6px;">Alterar permissões</div>
<div style="position:absolute;top:338.0px;white-space:pre;font:normal 12px/20px 'Liberation Sans', Arial, sans-serif;color:#333;letter-spacing:-0.120px;left:467.3px;">Arquivo(s):</div>
<div style="position:absolute;top:352.0px;white-space:pre;font:normal 12px/20px 'Liberation Sans', Arial, sans-serif;color:#000;letter-spacing:-0.094px;left:467.3px;">/public_html/.htaccess</div>
<div style="position:absolute;top:375.0px;white-space:pre;font:bold 12px/20px 'Liberation Sans', Arial, sans-serif;color:#333;letter-spacing:-0.075px;left:484.4px;">Modo</div>
<div style="position:absolute;top:375.0px;white-space:pre;font:normal 12px/20px 'Liberation Sans', Arial, sans-serif;color:#333;letter-spacing:-0.151px;left:576.9px;">Usuário</div>
<div style="position:absolute;top:375.0px;white-space:pre;font:normal 12px/20px 'Liberation Sans', Arial, sans-serif;color:#333;letter-spacing:-0.192px;left:705.8px;">Grupo</div>
<div style="position:absolute;top:375.0px;white-space:pre;font:normal 12px/20px 'Liberation Sans', Arial, sans-serif;color:#333;left:827.1px;">Mundo</div>
<div style="position:absolute;top:402.5px;white-space:pre;font:normal 12px/20px 'Liberation Sans', Arial, sans-serif;color:#333;letter-spacing:-0.158px;left:482.5px;">Leitura</div>
<div style="position:absolute;top:430.5px;white-space:pre;font:normal 12px/20px 'Liberation Sans', Arial, sans-serif;color:#333;letter-spacing:-0.181px;left:482.5px;">Gravar</div>
<div style="position:absolute;top:458.5px;white-space:pre;font:normal 12px/20px 'Liberation Sans', Arial, sans-serif;color:#333;letter-spacing:-0.120px;left:477.2px;">Executar</div>
<div style="position:absolute;top:487.0px;white-space:pre;font:normal 12px/20px 'Liberation Sans', Arial, sans-serif;color:#333;letter-spacing:-0.099px;left:472.3px;">Permissão</div>
<div style="position:absolute;top:496.3px;white-space:pre;font:normal 14px/20px 'Liberation Sans', Arial, sans-serif;color:#555;left:551px;">6</div>
<div style="position:absolute;top:496.3px;white-space:pre;font:normal 14px/20px 'Liberation Sans', Arial, sans-serif;color:#555;left:678px;">4</div>
<div style="position:absolute;top:496.3px;white-space:pre;font:normal 14px/20px 'Liberation Sans', Arial, sans-serif;color:#555;left:801px;">4</div>
<div style="position:absolute;top:585.3px;white-space:pre;font:bold 11.4px/20px 'DejaVu Sans', Verdana, sans-serif;color:#2e2e2e;letter-spacing:-0.487px;left:749.0px;">Change Permissions</div>
<div style="position:absolute;top:585.3px;white-space:pre;font:normal 12.5px/20px 'Liberation Sans', Arial, sans-serif;color:#222;letter-spacing:-0.379px;left:881.0px;">Cancelar</div>
</div>
<div id="ann">
<div style="position:absolute;left:409px;top:369px;width:545px;height:164px;box-sizing:border-box;border:4px solid #f2cd1b"></div>
<div style="position:absolute;left:705px;top:568px;width:204px;height:53.500px;box-sizing:border-box;border:4px solid #f2cd1b"></div>
<div style="position:absolute;left:397.85px;top:353.8px;width:25px;height:25px;border-radius:50%;background:#f2cd1b"></div>
<div style="position:absolute;left:397.85px;top:352.8px;width:25px;height:25px;text-align:center;color:#fff;-webkit-text-stroke:.500px #fff;font:bold 19px/25px 'Liberation Sans', Arial, sans-serif">3</div>
<div style="position:absolute;left:693.8px;top:556.8px;width:25px;height:25px;border-radius:50%;background:#f2cd1b"></div>
<div style="position:absolute;left:693.8px;top:555.8px;width:25px;height:25px;text-align:center;color:#fff;-webkit-text-stroke:.500px #fff;font:bold 19px/25px 'Liberation Sans', Arial, sans-serif">4</div>
</div>
</body></html>
